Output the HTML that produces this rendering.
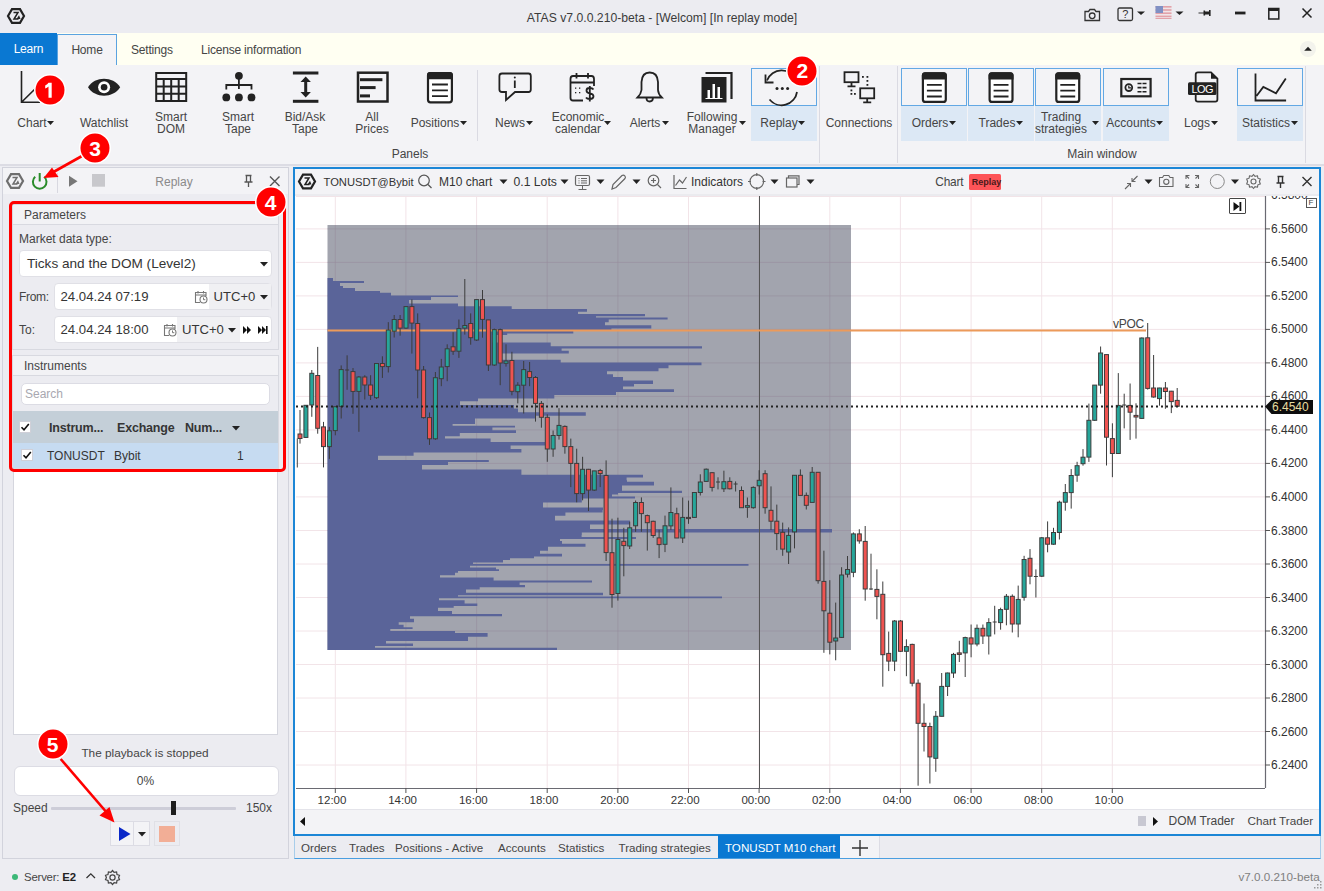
<!DOCTYPE html><html><head><meta charset="utf-8"><style>
*{box-sizing:border-box;margin:0;padding:0}
html,body{width:1324px;height:891px;overflow:hidden;background:#ededf2;font-family:"Liberation Sans", sans-serif;color:#333;}
.a{position:absolute}
.t{position:absolute;white-space:nowrap;font-size:12px;line-height:14px;color:#454545;letter-spacing:-0.2px}
svg{position:absolute;overflow:visible}
</style></head><body>

<div class="a" style="left:0;top:0;width:1324px;height:33px;background:#ececf1"></div>
<div class="t" style="left:0;top:10.5px;width:1324px;text-align:center;color:#3b3b3b;font-size:12.2px;letter-spacing:0">ATAS v7.0.0.210-beta - [Welcom] [In replay mode]</div>
<div class="a" style="left:0;top:33px;width:1324px;height:32px;background:#fffff2"></div>
<div class="a" style="left:0;top:33px;width:57px;height:32px;background:#0a78d2"></div>
<div class="t" style="left:0;top:42px;width:57px;text-align:center;color:#fff">Learn</div>
<div class="a" style="left:57px;top:34px;width:60px;height:32px;background:#f3f3f6;border:1px solid #5aa3e0;border-bottom:none"></div>
<div class="t" style="left:57px;top:43px;width:60px;text-align:center">Home</div>
<div class="t" style="left:131px;top:43px">Settings</div>
<div class="t" style="left:201px;top:43px">License information</div>
<div class="a" style="left:0;top:65px;width:1324px;height:100px;background:#f3f3f6"></div>
<div class="a" style="left:0;top:164px;width:1324px;height:2px;background:#dcdce4"></div>
<div class="a" style="left:750.5px;top:106px;width:66.0px;height:35px;background:#dce8f5"></div>
<div class="a" style="left:750.5px;top:68px;width:66.0px;height:38px;border:1px solid #62a8e4"></div>
<div class="a" style="left:901px;top:106px;width:66px;height:35px;background:#dce8f5"></div>
<div class="a" style="left:901px;top:68px;width:66px;height:38px;border:1px solid #62a8e4"></div>
<div class="a" style="left:968px;top:106px;width:66px;height:35px;background:#dce8f5"></div>
<div class="a" style="left:968px;top:68px;width:66px;height:38px;border:1px solid #62a8e4"></div>
<div class="a" style="left:1035px;top:106px;width:66px;height:35px;background:#dce8f5"></div>
<div class="a" style="left:1035px;top:68px;width:66px;height:38px;border:1px solid #62a8e4"></div>
<div class="a" style="left:1102.5px;top:106px;width:66.0px;height:35px;background:#dce8f5"></div>
<div class="a" style="left:1102.5px;top:68px;width:66.0px;height:38px;border:1px solid #62a8e4"></div>
<div class="a" style="left:1237px;top:106px;width:66px;height:35px;background:#dce8f5"></div>
<div class="a" style="left:1237px;top:68px;width:66px;height:38px;border:1px solid #62a8e4"></div>
<div class="a" style="left:477px;top:70px;width:1px;height:71px;background:#dadae2"></div>
<div class="a" style="left:819px;top:66px;width:1px;height:97px;background:#dadae2"></div>
<div class="a" style="left:897px;top:66px;width:1px;height:97px;background:#dadae2"></div>
<div class="a" style="left:1305px;top:66px;width:1px;height:97px;background:#dadae2"></div>
<div class="t" style="left:-28px;top:116px;width:120px;text-align:center;font-size:12px;color:#454545;letter-spacing:0">Chart</div>
<div class="t" style="left:44px;top:116px;width:120px;text-align:center;font-size:12px;color:#454545;letter-spacing:0">Watchlist</div>
<div class="t" style="left:111px;top:110px;width:120px;text-align:center;font-size:12px;color:#454545;letter-spacing:0">Smart</div>
<div class="t" style="left:111px;top:122px;width:120px;text-align:center;font-size:12px;color:#454545;letter-spacing:0">DOM</div>
<div class="t" style="left:178px;top:110px;width:120px;text-align:center;font-size:12px;color:#454545;letter-spacing:0">Smart</div>
<div class="t" style="left:178px;top:122px;width:120px;text-align:center;font-size:12px;color:#454545;letter-spacing:0">Tape</div>
<div class="t" style="left:245px;top:110px;width:120px;text-align:center;font-size:12px;color:#454545;letter-spacing:0">Bid/Ask</div>
<div class="t" style="left:245px;top:122px;width:120px;text-align:center;font-size:12px;color:#454545;letter-spacing:0">Tape</div>
<div class="t" style="left:312px;top:110px;width:120px;text-align:center;font-size:12px;color:#454545;letter-spacing:0">All</div>
<div class="t" style="left:312px;top:122px;width:120px;text-align:center;font-size:12px;color:#454545;letter-spacing:0">Prices</div>
<div class="t" style="left:375px;top:116px;width:120px;text-align:center;font-size:12px;color:#454545;letter-spacing:0">Positions</div>
<div class="t" style="left:450px;top:116px;width:120px;text-align:center;font-size:12px;color:#454545;letter-spacing:0">News</div>
<div class="t" style="left:518px;top:110px;width:120px;text-align:center;font-size:12px;color:#454545;letter-spacing:0">Economic</div>
<div class="t" style="left:518px;top:122px;width:120px;text-align:center;font-size:12px;color:#454545;letter-spacing:0">calendar</div>
<div class="t" style="left:585px;top:116px;width:120px;text-align:center;font-size:12px;color:#454545;letter-spacing:0">Alerts</div>
<div class="t" style="left:652px;top:110px;width:120px;text-align:center;font-size:12px;color:#454545;letter-spacing:0">Following</div>
<div class="t" style="left:652px;top:122px;width:120px;text-align:center;font-size:12px;color:#454545;letter-spacing:0">Manager</div>
<div class="t" style="left:719px;top:116px;width:120px;text-align:center;font-size:12px;color:#454545;letter-spacing:0">Replay</div>
<div class="t" style="left:799px;top:116px;width:120px;text-align:center;font-size:12px;color:#454545;letter-spacing:0">Connections</div>
<div class="t" style="left:870px;top:116px;width:120px;text-align:center;font-size:12px;color:#454545;letter-spacing:0">Orders</div>
<div class="t" style="left:937px;top:116px;width:120px;text-align:center;font-size:12px;color:#454545;letter-spacing:0">Trades</div>
<div class="t" style="left:1001px;top:110px;width:120px;text-align:center;font-size:12px;color:#454545;letter-spacing:0">Trading</div>
<div class="t" style="left:1001px;top:122px;width:120px;text-align:center;font-size:12px;color:#454545;letter-spacing:0">strategies</div>
<div class="t" style="left:1071px;top:116px;width:120px;text-align:center;font-size:12px;color:#454545;letter-spacing:0">Accounts</div>
<div class="t" style="left:1137px;top:116px;width:120px;text-align:center;font-size:12px;color:#454545;letter-spacing:0">Logs</div>
<div class="t" style="left:1206px;top:116px;width:120px;text-align:center;font-size:12px;color:#454545;letter-spacing:0">Statistics</div>
<div class="t" style="left:350px;top:147px;width:120px;text-align:center;font-size:12px;color:#454545;letter-spacing:0">Panels</div>
<div class="t" style="left:1042px;top:147px;width:120px;text-align:center;font-size:12px;color:#454545;letter-spacing:0">Main window</div>
<svg style="left:47px;top:121px" width="7" height="4"><path d="M0 0H7L3.5 4Z" fill="#222"/></svg>
<svg style="left:460px;top:121px" width="7" height="4"><path d="M0 0H7L3.5 4Z" fill="#222"/></svg>
<svg style="left:526px;top:121px" width="7" height="4"><path d="M0 0H7L3.5 4Z" fill="#222"/></svg>
<svg style="left:604px;top:121px" width="7" height="4"><path d="M0 0H7L3.5 4Z" fill="#222"/></svg>
<svg style="left:662px;top:121px" width="7" height="4"><path d="M0 0H7L3.5 4Z" fill="#222"/></svg>
<svg style="left:739px;top:121px" width="7" height="4"><path d="M0 0H7L3.5 4Z" fill="#222"/></svg>
<svg style="left:798px;top:121px" width="7" height="4"><path d="M0 0H7L3.5 4Z" fill="#222"/></svg>
<svg style="left:949px;top:121px" width="7" height="4"><path d="M0 0H7L3.5 4Z" fill="#222"/></svg>
<svg style="left:1016px;top:121px" width="7" height="4"><path d="M0 0H7L3.5 4Z" fill="#222"/></svg>
<svg style="left:1092px;top:121px" width="7" height="4"><path d="M0 0H7L3.5 4Z" fill="#222"/></svg>
<svg style="left:1156px;top:121px" width="7" height="4"><path d="M0 0H7L3.5 4Z" fill="#222"/></svg>
<svg style="left:1211px;top:121px" width="7" height="4"><path d="M0 0H7L3.5 4Z" fill="#222"/></svg>
<svg style="left:1291px;top:121px" width="7" height="4"><path d="M0 0H7L3.5 4Z" fill="#222"/></svg>

<svg style="left:0;top:0" width="1324" height="170" viewBox="0 0 1324 170">
<g fill="none" stroke="#222" stroke-width="1.6">
 <path d="M21.5 71V102.3H40M21.5 102.3L36 88"/>
</g>
<path d="M88 87.2C95 76 113 76 120.2 87.2C113 98.5 95 98.5 88 87.2Z" fill="#222"/>
<circle cx="104.1" cy="87.2" r="6" fill="#fff"/><circle cx="104.1" cy="87.2" r="3.3" fill="#222"/>
<g fill="none" stroke="#222" stroke-width="2">
 <rect x="156.2" y="73" width="30" height="28"/>
 <path d="M156.2 79H186.2M156.2 86.5H186.2M156.2 93.8H186.2M163.7 79V101M171.2 79V101M178.7 79V101"/>
</g>
<g fill="#222">
 <circle cx="238.9" cy="75.8" r="3.9"/><circle cx="226.3" cy="97.4" r="3.9"/><circle cx="238.9" cy="97.4" r="3.9"/><circle cx="251.5" cy="97.4" r="3.9"/>
</g>
<path d="M238.9 79V89M226.3 89.5V85H251.5V89.5" fill="none" stroke="#222" stroke-width="1.8"/>
<g fill="#222">
 <rect x="292.9" y="71.5" width="25.5" height="3"/><rect x="292.9" y="99.8" width="25.5" height="3"/>
 <path d="M305.7 76.5L300.5 82H304.2V92H300.5L305.7 97.5L310.9 92H307.2V82H310.9Z"/>
</g>
<rect x="358" y="72.7" width="29.5" height="28.8" fill="none" stroke="#222" stroke-width="2.5"/>
<g fill="#222"><rect x="360" y="78.2" width="22.4" height="3"/><rect x="360" y="86.1" width="15.6" height="3"/><rect x="360" y="94.4" width="10" height="3"/></g>
<rect x="428" y="73" width="23.9" height="29.3" rx="2.5" fill="#fff" stroke="#222" stroke-width="2.2"/>
<path d="M427 75Q427 72 430 72H449.9Q452.9 72 452.9 75V79.3H427Z" fill="#222"/>
<path d="M432 84.5H447.9M432 90.3H447.9M432 96.2H447.9" stroke="#222" stroke-width="1.8"/><rect x="922.9" y="73.3" width="22.9" height="28.6" rx="2.5" fill="#fff" stroke="#222" stroke-width="2.2"/>
<path d="M921.9 75.3Q921.9 72.3 924.9 72.3H943.8Q946.8 72.3 946.8 75.3V79.6H921.9Z" fill="#222"/>
<path d="M926.9 84.8H941.8M926.9 90.6H941.8M926.9 96.5H941.8" stroke="#222" stroke-width="1.8"/><rect x="989.6" y="73.3" width="22.9" height="28.6" rx="2.5" fill="#fff" stroke="#222" stroke-width="2.2"/>
<path d="M988.6 75.3Q988.6 72.3 991.6 72.3H1010.5Q1013.5 72.3 1013.5 75.3V79.6H988.6Z" fill="#222"/>
<path d="M993.6 84.8H1008.5M993.6 90.6H1008.5M993.6 96.5H1008.5" stroke="#222" stroke-width="1.8"/><rect x="1056.3" y="73.3" width="22.9" height="28.6" rx="2.5" fill="#fff" stroke="#222" stroke-width="2.2"/>
<path d="M1055.3 75.3Q1055.3 72.3 1058.3 72.3H1077.2Q1080.2 72.3 1080.2 75.3V79.6H1055.3Z" fill="#222"/>
<path d="M1060.3 84.8H1075.2M1060.3 90.6H1075.2M1060.3 96.5H1075.2" stroke="#222" stroke-width="1.8"/>
<path d="M502 73.5H528.5Q530.8 73.5 530.8 76V89.5Q530.8 92 528.5 92H515L506 100V92H502Q499.4 92 499.4 89.5V76Q499.4 73.5 502 73.5Z" fill="none" stroke="#222" stroke-width="1.8"/>
<path d="M514.8 80.5V88" stroke="#222" stroke-width="1.8"/><circle cx="514.8" cy="77.5" r="1" fill="#222"/>
<g fill="none" stroke="#222" stroke-width="1.8">
 <path d="M583 100.5H573Q570.5 100.5 570.5 98V79Q570.5 76 573 76H591.5Q594 76 594 79V86"/>
 <path d="M570.5 82.5H594M576.5 73V78.5M588 73V78.5"/>
 <path d="M593.5 89.5Q592.5 88 589.5 88Q586.5 88 586.5 90.5Q586.5 93 589.8 93.3Q593.5 93.8 593.5 96.3Q593.5 99 589.8 99Q587 99 586 97.5M589.8 86V101.5"/>
</g>
<g fill="#222"><rect x="575" y="87.5" width="1.3" height="1.3"/><rect x="579" y="87.5" width="1.3" height="1.3"/><rect x="575" y="92" width="1.3" height="1.3"/><rect x="579" y="92" width="1.3" height="1.3"/></g>
<path d="M649.7 72.5Q642 72.5 641.5 82V90Q641 94 637.5 97.5H661.8Q658.2 94 658 90V82Q657.5 72.5 649.7 72.5Z" fill="none" stroke="#222" stroke-width="1.8"/>
<path d="M646.5 98Q646.5 101.5 649.7 101.5Q652.9 101.5 652.9 98" fill="none" stroke="#222" stroke-width="1.8"/>
<rect x="701.5" y="77" width="25" height="25.5" fill="#222"/>
<path d="M705.5 73H731.5V99" fill="none" stroke="#222" stroke-width="2.2"/>
<g fill="#fff"><rect x="707.5" y="90" width="2.5" height="8"/><rect x="712.5" y="84" width="2.5" height="14"/><rect x="717.5" y="87" width="2.5" height="11"/><rect x="705.5" y="98" width="17" height="1"/></g>
<path d="M767 80.5A15.6 15.6 0 0 1 796 80M797 92A15.6 15.6 0 0 1 769.5 99.5" fill="none" stroke="#222" stroke-width="1.8"/>
<path d="M765.5 74.5V82.5H773.5" fill="none" stroke="#222" stroke-width="1.8"/>
<g fill="#222"><circle cx="777" cy="88.5" r="1.5"/><circle cx="782.3" cy="88.5" r="1.5"/><circle cx="787.6" cy="88.5" r="1.5"/></g>
<g fill="none" stroke="#222" stroke-width="1.8">
 <rect x="844.5" y="72.2" width="14" height="10"/><rect x="860.2" y="88.3" width="14" height="10"/>
 <path d="M851.5 82.5V86M847.5 86.3H855.5M867.2 98.5V102M863.2 102.3H871.2"/>
</g>
<g fill="#222"><rect x="862" y="76" width="1.8" height="1.8"/><rect x="866.5" y="76" width="1.8" height="1.8"/><rect x="866.5" y="80" width="1.8" height="1.8"/><rect x="866.5" y="84" width="1.8" height="1.8"/><rect x="850.5" y="89.5" width="1.8" height="1.8"/><rect x="850.5" y="93" width="1.8" height="1.8"/><rect x="854" y="93" width="1.8" height="1.8"/></g>
<rect x="1121.3" y="79" width="29.3" height="17.3" fill="none" stroke="#222" stroke-width="2.2"/>
<circle cx="1128.8" cy="87.6" r="3.4" fill="none" stroke="#222" stroke-width="1.8"/><path d="M1128.8 85.5V87.8H1131" stroke="#222" stroke-width="1.2" fill="none"/>
<path d="M1137.5 83.5H1147M1137.5 87.6H1147M1137.5 91.7H1147" stroke="#222" stroke-width="1.6" stroke-dasharray="4 1"/>
<path d="M1198 72.3H1211L1217.4 78.7V99.5Q1217.4 101.6 1215.3 101.6H1198Q1195.7 101.6 1195.7 99.5V74.5Q1195.7 72.3 1198 72.3Z" fill="none" stroke="#222" stroke-width="1.8"/>
<path d="M1211 72.3V78.7H1217.4Z" fill="#222"/>
<rect x="1188" y="82.3" width="28.4" height="12.7" rx="1.5" fill="#222"/>
<text x="1202.2" y="93.3" font-family="Liberation Sans" font-size="11" fill="#fff" text-anchor="middle" letter-spacing="-0.6">LOG</text>
<path d="M1255.5 73.5V100.5H1286.1M1256.5 96L1263.3 87L1276 93.3L1285.8 78.6" fill="none" stroke="#222" stroke-width="1.8"/>
</svg>
<svg style="left:0;top:0" width="1324" height="33">
<path d="M8 16L12 9.2H20L24 16L20 22.8H12Z" fill="none" stroke="#222" stroke-width="2.2"/>
<path d="M13.5 12.5H18L14 19H18.5" fill="none" stroke="#222" stroke-width="1.5"/><path d="M16.5 19L19 15.3L20.5 19Z" fill="#222"/>
<path d="M1085 11.5H1088.5L1090 9.5H1094.5L1096 11.5H1099.5V20.5H1085Z" fill="none" stroke="#333" stroke-width="1.3"/>
<circle cx="1092.2" cy="15.8" r="2.8" fill="none" stroke="#333" stroke-width="1.3"/>
<rect x="1118" y="8" width="14.5" height="12.5" rx="1.5" fill="none" stroke="#333" stroke-width="1.3"/>
<text x="1125.2" y="18.3" font-family="Liberation Sans" font-size="11" fill="#333" text-anchor="middle">?</text>
<path d="M1137 11.5H1145L1141 15Z" fill="#222"/>
<rect x="1155.5" y="6" width="16" height="13" fill="#f0e4e8"/>
<g fill="#e2a2aa"><rect x="1155.5" y="6" width="16" height="1.6"/><rect x="1155.5" y="9.2" width="16" height="1.6"/><rect x="1155.5" y="12.4" width="16" height="1.6"/><rect x="1155.5" y="15.6" width="16" height="1.6"/><rect x="1155.5" y="18" width="16" height="1"/></g>
<rect x="1155.5" y="6" width="7.5" height="7" fill="#8090c4"/>
<path d="M1175.5 11.5H1183.5L1179.5 15Z" fill="#222"/>
<path d="M1198.5 13H1204" stroke="#333" stroke-width="1"/><rect x="1203.5" y="10.5" width="1.6" height="5" fill="#222"/><rect x="1205" y="11.5" width="4" height="3" fill="#222"/><rect x="1209" y="10" width="1.6" height="6" fill="#222"/>
<rect x="1235" y="11.6" width="10.5" height="2.8" fill="#222"/>
<rect x="1268.8" y="8.5" width="10" height="10.5" fill="none" stroke="#222" stroke-width="1.5"/><rect x="1268.8" y="8.5" width="10" height="2.5" fill="#222"/>
<path d="M1302.5 8.5L1311.5 17.5M1311.5 8.5L1302.5 17.5" stroke="#222" stroke-width="1.5"/>
</svg>
<svg style="left:1298px;top:38.5px" width="20" height="20"><circle cx="10" cy="10" r="8" fill="#f3f3ec"/><path d="M6.2 11.8H13.8L10 7.8Z" fill="#222"/></svg>
<div class="a" style="left:2px;top:167px;width:287px;height:692px;background:#ececf1;border:1px solid #d2d3dc"></div>
<div class="a" style="left:3px;top:168px;width:285px;height:26px;background:#f3f3f6"></div>
<svg style="left:0;top:165px" width="290" height="32">
<path d="M7 16L11 9.2H19L23 16L19 22.8H11Z" fill="none" stroke="#6e6e6e" stroke-width="2.2"/>
<path d="M12.5 12.5H17L13 19H17.5" fill="none" stroke="#6e6e6e" stroke-width="1.5"/><path d="M15.5 19L18 15.3L19.5 19Z" fill="#6e6e6e"/>
<path d="M35.2 11.8A6.8 6.8 0 1 0 44.2 11.8" fill="none" stroke="#2a8c2a" stroke-width="2"/><path d="M39.7 8V16.5" stroke="#2a8c2a" stroke-width="2"/>
<rect x="57" y="8" width="1" height="20" fill="#d8d8e0"/>
<path d="M69 10.7L77.5 16.2L69 21.7Z" fill="#777"/>
<rect x="92" y="9" width="13" height="12.7" fill="#c8c8cc"/>
<path d="M245.5 10.5H251.5M246.5 10.5V17H250.5V10.5M244.5 17H252.5M248.5 17V22" fill="none" stroke="#555" stroke-width="1.3"/>
<path d="M270 11.5L279.5 21M279.5 11.5L270 21" stroke="#555" stroke-width="1.4"/>
</svg>
<div class="t" style="left:74.0px;top:174.5px;width:200px;text-align:center;font-size:12px;color:#8a8a8a;letter-spacing:0;">Replay</div>
<div class="a" style="left:12px;top:204px;width:267px;height:146px;background:#ececf1;border:1px solid #d8d9e0"></div>
<div class="a" style="left:13px;top:205px;width:265px;height:20px;background:#f2f2f5;border-bottom:1px solid #d8d9e0"></div>
<div class="t" style="left:24px;top:208px;font-size:12px;color:#454545;letter-spacing:0;">Parameters</div>
<div class="t" style="left:19px;top:232px;font-size:12px;color:#454545;letter-spacing:0;">Market data type:</div>
<div class="a" style="left:19px;top:250px;width:253px;height:27px;background:#fff;border:1px solid #e0e0e6;border-radius:4px"></div>
<div class="t" style="left:27px;top:256.5px;font-size:13.6px;color:#353535;letter-spacing:0;">Ticks and the DOM (Level2)</div>
<svg style="left:260px;top:261.5px" width="8" height="4.5"><path d="M0 0H8L4.0 4.5Z" fill="#222"/></svg>
<div class="t" style="left:19px;top:289.5px;font-size:12px;color:#454545;letter-spacing:0;letter-spacing:-0.3px">From:</div>
<div class="a" style="left:54px;top:283px;width:218px;height:27px;background:#fff;border:1px solid #e0e0e6;border-radius:4px"></div>
<div class="a" style="left:209px;top:284px;width:62px;height:25px;background:#f0f0f3"></div>
<div class="t" style="left:60.5px;top:289.5px;font-size:13.2px;color:#353535;letter-spacing:0;">24.04.24 07:19</div>
<div class="t" style="left:213.5px;top:290px;font-size:13.1px;color:#353535;letter-spacing:0;">UTC+0</div>
<svg style="left:260px;top:294.5px" width="8" height="4.5"><path d="M0 0H8L4.0 4.5Z" fill="#222"/></svg>
<div class="t" style="left:19px;top:322.5px;font-size:12px;color:#454545;letter-spacing:0;">To:</div>
<div class="a" style="left:54px;top:316px;width:218px;height:27px;background:#fff;border:1px solid #e0e0e6;border-radius:4px"></div>
<div class="a" style="left:177px;top:317px;width:63px;height:25px;background:#f0f0f3"></div>
<div class="t" style="left:60.5px;top:322.5px;font-size:13.2px;color:#353535;letter-spacing:0;">24.04.24 18:00</div>
<div class="t" style="left:182px;top:323px;font-size:13.1px;color:#353535;letter-spacing:0;">UTC+0</div>
<svg style="left:228px;top:327.5px" width="8" height="4.5"><path d="M0 0H8L4.0 4.5Z" fill="#222"/></svg>
<svg style="left:194px;top:289.5px" width="14" height="14"><path d="M6 12.5H1.5V2.5H12V6" fill="none" stroke="#777" stroke-width="1.1"/><path d="M1.5 5H12M4 1V3.5M9.5 1V3.5" stroke="#777" stroke-width="1.1"/><circle cx="9.5" cy="9.5" r="3.5" fill="#fff" stroke="#777" stroke-width="1.1"/><path d="M9.5 7.5V9.7H11.3" fill="none" stroke="#777" stroke-width="1"/></svg>
<svg style="left:162.5px;top:322.5px" width="14" height="14"><path d="M6 12.5H1.5V2.5H12V6" fill="none" stroke="#777" stroke-width="1.1"/><path d="M1.5 5H12M4 1V3.5M9.5 1V3.5" stroke="#777" stroke-width="1.1"/><circle cx="9.5" cy="9.5" r="3.5" fill="#fff" stroke="#777" stroke-width="1.1"/><path d="M9.5 7.5V9.7H11.3" fill="none" stroke="#777" stroke-width="1"/></svg>
<svg style="left:243px;top:325px" width="28" height="10"><path d="M0 1L4 5L0 9ZM4 1L8 5L4 9Z" fill="#111"/><path d="M15 1L19 5L15 9ZM19 1L23 5L19 9Z" fill="#111"/><rect x="23" y="1" width="1.6" height="8" fill="#111"/></svg>
<div class="a" style="left:12px;top:355px;width:267px;height:114px;background:#ececf1;border:1px solid #d8d9e0"></div>
<div class="a" style="left:13px;top:356px;width:265px;height:20px;background:#f2f2f5;border-bottom:1px solid #d8d9e0"></div>
<div class="t" style="left:24px;top:358.5px;font-size:12px;color:#454545;letter-spacing:0;">Instruments</div>
<div class="a" style="left:21px;top:383px;width:249px;height:22px;background:#fff;border:1px solid #dcdce4;border-radius:5px"></div>
<div class="t" style="left:25px;top:387px;font-size:12px;color:#a8a8b0;letter-spacing:0;">Search</div>
<div class="a" style="left:13px;top:411px;width:265px;height:32px;background:#c4cfd8"></div>
<div class="a" style="left:13px;top:443px;width:265px;height:25px;background:#c6dbf1"></div>
<div class="a" style="left:19px;top:421px;width:12px;height:12px;background:#fff;border:1px solid #d0d0d8"></div><svg style="left:19px;top:421px" width="12" height="12"><path d="M2.5 6.2L5 8.8L9.8 3" fill="none" stroke="#111" stroke-width="1.6"/></svg>
<div class="a" style="left:21px;top:449px;width:12px;height:12px;background:#fff;border:1px solid #d0d0d8"></div><svg style="left:21px;top:449px" width="12" height="12"><path d="M2.5 6.2L5 8.8L9.8 3" fill="none" stroke="#111" stroke-width="1.6"/></svg>
<div class="t" style="left:49px;top:421px;font-size:12.5px;color:#353535;letter-spacing:0;font-weight:bold;letter-spacing:-0.2px">Instrum...</div>
<div class="t" style="left:117px;top:421px;font-size:12.5px;color:#353535;letter-spacing:0;font-weight:bold;letter-spacing:-0.2px">Exchange</div>
<div class="t" style="left:185px;top:421px;font-size:12.5px;color:#353535;letter-spacing:0;font-weight:bold;letter-spacing:-0.2px">Num...</div>
<svg style="left:232px;top:426px" width="8" height="4.5"><path d="M0 0H8L4.0 4.5Z" fill="#222"/></svg>
<div class="t" style="left:47px;top:448.5px;font-size:12px;color:#353535;letter-spacing:0;">TONUSDT</div>
<div class="t" style="left:114px;top:448.5px;font-size:12px;color:#353535;letter-spacing:0;">Bybit</div>
<div class="t" style="left:237px;top:448.5px;font-size:12px;color:#353535;letter-spacing:0;">1</div>
<div class="a" style="left:13px;top:471px;width:265px;height:264px;background:#fff;border:1px solid #d5d6de"></div>
<div class="t" style="left:45.0px;top:746px;width:200px;text-align:center;font-size:11.8px;color:#454545;letter-spacing:0;">The playback is stopped</div>
<div class="a" style="left:13.5px;top:765.5px;width:265px;height:30px;background:#fff;border:1px solid #dcdce4;border-radius:6px"></div>
<div class="t" style="left:45.5px;top:774px;width:200px;text-align:center;font-size:12px;color:#454545;letter-spacing:0;">0%</div>
<div class="t" style="left:13px;top:801px;font-size:12px;color:#454545;letter-spacing:0;">Speed</div>
<div class="a" style="left:51px;top:807px;width:185px;height:2.5px;background:#cdcdd8;border-radius:1px"></div>
<div class="a" style="left:170.5px;top:801px;width:5.5px;height:13.5px;background:#1e1e1e"></div>
<div class="t" style="left:246px;top:801px;font-size:12px;color:#454545;letter-spacing:0;">150x</div>
<div class="a" style="left:110px;top:821px;width:39.5px;height:25px;background:#f3f3f6;border:1px solid #dcdce4"></div>
<div class="a" style="left:132.5px;top:821px;width:1px;height:25px;background:#dcdce4"></div>
<svg style="left:118px;top:826px" width="14" height="16"><path d="M1 1L12.5 8L1 15Z" fill="#0a28c8"/></svg>
<svg style="left:137.5px;top:832px" width="8" height="4.5"><path d="M0 0H8L4.0 4.5Z" fill="#222"/></svg>
<div class="a" style="left:154px;top:821px;width:26px;height:25px;background:#ececf1;border:1px solid #e0e0e6"></div>
<div class="a" style="left:159px;top:826px;width:16px;height:16px;background:#f2ae96"></div>
<div class="a" style="left:293px;top:167px;width:1028px;height:669px;background:#fff;border:2px solid #1c86d6"></div>
<div class="a" style="left:295px;top:169px;width:1024px;height:27px;background:#f3f3f6"></div>
<div class="a" style="left:295px;top:194px;width:1024px;height:2px;background:#ebebef"></div>
<svg style="left:0;top:165px" width="1324" height="32">
<path d="M299 16.5L303 9.7H311L315 16.5L311 23.3H303Z" fill="none" stroke="#222" stroke-width="2.2"/>
<path d="M304.5 13H309L305 19.5H309.5" fill="none" stroke="#222" stroke-width="1.5"/><path d="M307.5 19.5L310 15.8L311.5 19.5Z" fill="#222"/>
<circle cx="424" cy="15.5" r="5.3" fill="none" stroke="#555" stroke-width="1.2"/><path d="M428 19.5L431.5 23" stroke="#555" stroke-width="1.3"/>
<path d="M499.5 14.5H507.5L503.5 19Z" fill="#222"/>
<path d="M560.5 14.5H568.5L564.5 19Z" fill="#222"/>
<rect x="575.5" y="10.5" width="14" height="10" rx="1.5" fill="none" stroke="#666" stroke-width="1.2"/><path d="M582.5 20.5V24M578.5 24.5H586.5M578.5 13.5H579.5M581 13.5H587M578.5 15.8H579.5M581 15.8H587M578.5 18H579.5M581 18H587" stroke="#666" stroke-width="1"/>
<path d="M596.5 14.5H604.5L600.5 19Z" fill="#222"/>
<path d="M612 24L613 19.5L622 10.5Q623.5 9.5 624.8 10.8Q626 12 625 13.5L616 22.5Z" fill="none" stroke="#666" stroke-width="1.2"/>
<path d="M632.5 14.5H640.5L636.5 19Z" fill="#222"/>
<circle cx="653.5" cy="15.5" r="5.3" fill="none" stroke="#666" stroke-width="1.2"/><path d="M657.5 19.5L661 23M651 15.5H656M653.5 13V18" stroke="#666" stroke-width="1.2"/>
<path d="M674 10V23.5H686.5M675.5 20.5L679.5 15L682.5 18L686.5 12" fill="none" stroke="#666" stroke-width="1.2"/>
<circle cx="756.8" cy="16.5" r="6.8" fill="none" stroke="#666" stroke-width="1.2"/><path d="M756.8 8V11M756.8 22V25M748 16.5H751M762.5 16.5H765.5" stroke="#666" stroke-width="1.2"/>
<path d="M770.5 14.5H778.5L774.5 19Z" fill="#222"/>
<rect x="786.5" y="13" width="10.5" height="9" fill="none" stroke="#666" stroke-width="1.2"/><path d="M788.5 13V10.8H799V19.5H797" fill="none" stroke="#666" stroke-width="1.2"/>
<path d="M806.5 14.5H814.5L810.5 19Z" fill="#222"/>
<path d="M1125 24L1130.5 18.5M1127 18.5H1130.5V22M1137.5 11L1132 16.5M1132 13V16.5H1135.5" fill="none" stroke="#666" stroke-width="1.1"/>
<path d="M1144.5 14.5H1152.5L1148.5 19Z" fill="#222"/>
<path d="M1159.5 12.5H1162.5L1163.8 10.5H1168.8L1170 12.5H1173V21.5H1159.5Z" fill="none" stroke="#666" stroke-width="1.1"/><circle cx="1166.3" cy="16.8" r="2.6" fill="none" stroke="#666" stroke-width="1.1"/>
<path d="M1186 14V10.5H1189.5M1198.5 14V10.5H1195M1186 19V22.5H1189.5M1198.5 19V22.5H1195M1186 10.5L1189 13.5M1198.5 10.5L1195.5 13.5M1186 22.5L1189 19.5M1198.5 22.5L1195.5 19.5" fill="none" stroke="#666" stroke-width="1.1"/>
<circle cx="1217.3" cy="16.5" r="7" fill="none" stroke="#888" stroke-width="1"/>
<path d="M1231 14.5H1239L1235 19Z" fill="#222"/>
<circle cx="1253.5" cy="16.5" r="2.5" fill="none" stroke="#666" stroke-width="1.1"/>
<path d="M1253.5 9.5L1255 11.3L1257.5 10.8L1257.9 13.2L1260.3 14L1259.4 16.5L1260.3 19L1257.9 19.8L1257.5 22.2L1255 21.7L1253.5 23.5L1252 21.7L1249.5 22.2L1249.1 19.8L1246.7 19L1247.6 16.5L1246.7 14L1249.1 13.2L1249.5 10.8L1252 11.3Z" fill="none" stroke="#666" stroke-width="1.1"/>
<path d="M1277.5 11.5H1283.5M1278.5 11.5V18H1282.5V11.5M1276.5 18H1284.5M1280.5 18V23" fill="none" stroke="#333" stroke-width="1.4"/>
<path d="M1302.5 12L1311.5 21M1311.5 12L1302.5 21" stroke="#333" stroke-width="1.4"/>
</svg>
<div class="t" style="left:323.5px;top:175px;font-size:11.2px;color:#333;letter-spacing:0;">TONUSDT@Bybit</div>
<div class="t" style="left:439px;top:175px;font-size:12px;color:#333;letter-spacing:0;">M10 chart</div>
<div class="t" style="left:513.5px;top:175px;font-size:12.2px;color:#333;letter-spacing:0;">0.1 Lots</div>
<div class="t" style="left:691px;top:175px;font-size:12px;color:#333;letter-spacing:0;">Indicators</div>
<div class="t" style="left:935.3px;top:175px;font-size:11.9px;color:#444;letter-spacing:0;letter-spacing:-0.2px">Chart</div>
<div class="a" style="left:969px;top:173.8px;width:32px;height:15.8px;background:#fd5458;border-radius:1.5px"></div>
<div class="t" style="left:971.8px;top:175px;font-size:9px;color:#4a1a1a;letter-spacing:0;font-weight:bold">Replay</div>
<div class="a" style="left:1229px;top:197.5px;width:16.5px;height:16.5px;background:#fff;border:1px solid #444;border-radius:1px"></div>
<svg style="left:1229px;top:197.5px" width="17" height="17"><path d="M4.5 4L10.5 8.5L4.5 13Z" fill="#111"/><rect x="10.5" y="4" width="1.8" height="9" fill="#111"/></svg>
<div class="a" style="left:1306.4px;top:197.5px;width:10.5px;height:10.5px;background:#fff;border:1px solid #555"></div>
<div class="t" style="left:1308.5px;top:195.8px;font-size:8px;color:#444;letter-spacing:0;">F</div>
<div class="a" style="left:295px;top:809px;width:1024px;height:25px;background:#f3f3f6;border-top:1px solid #e4e4ea"></div>
<svg style="left:0;top:0" width="1324" height="891" viewBox="0 0 1324 891">
<defs><clipPath id="pc"><rect x="296" y="196" width="969" height="592"/></clipPath></defs>
<g clip-path="url(#pc)">
<line x1="296" y1="196.5" x2="1265" y2="196.5" stroke="#f2e4e8" stroke-width="1"/>
<line x1="335.3" y1="196" x2="335.3" y2="788" stroke="#f2e4e8" stroke-width="1"/>
<line x1="405.9" y1="196" x2="405.9" y2="788" stroke="#f2e4e8" stroke-width="1"/>
<line x1="476.6" y1="196" x2="476.6" y2="788" stroke="#f2e4e8" stroke-width="1"/>
<line x1="547.2" y1="196" x2="547.2" y2="788" stroke="#f2e4e8" stroke-width="1"/>
<line x1="617.9" y1="196" x2="617.9" y2="788" stroke="#f2e4e8" stroke-width="1"/>
<line x1="688.5" y1="196" x2="688.5" y2="788" stroke="#f2e4e8" stroke-width="1"/>
<line x1="759.1" y1="196" x2="759.1" y2="788" stroke="#f2e4e8" stroke-width="1"/>
<line x1="829.8" y1="196" x2="829.8" y2="788" stroke="#f2e4e8" stroke-width="1"/>
<line x1="900.4" y1="196" x2="900.4" y2="788" stroke="#f2e4e8" stroke-width="1"/>
<line x1="971.1" y1="196" x2="971.1" y2="788" stroke="#f2e4e8" stroke-width="1"/>
<line x1="1041.7" y1="196" x2="1041.7" y2="788" stroke="#f2e4e8" stroke-width="1"/>
<line x1="1112.3" y1="196" x2="1112.3" y2="788" stroke="#f2e4e8" stroke-width="1"/>
<line x1="296" y1="228.9" x2="1265" y2="228.9" stroke="#f2e4e8" stroke-width="1"/>
<line x1="296" y1="262.4" x2="1265" y2="262.4" stroke="#f2e4e8" stroke-width="1"/>
<line x1="296" y1="295.9" x2="1265" y2="295.9" stroke="#f2e4e8" stroke-width="1"/>
<line x1="296" y1="329.4" x2="1265" y2="329.4" stroke="#f2e4e8" stroke-width="1"/>
<line x1="296" y1="362.9" x2="1265" y2="362.9" stroke="#f2e4e8" stroke-width="1"/>
<line x1="296" y1="396.4" x2="1265" y2="396.4" stroke="#f2e4e8" stroke-width="1"/>
<line x1="296" y1="429.9" x2="1265" y2="429.9" stroke="#f2e4e8" stroke-width="1"/>
<line x1="296" y1="463.4" x2="1265" y2="463.4" stroke="#f2e4e8" stroke-width="1"/>
<line x1="296" y1="496.9" x2="1265" y2="496.9" stroke="#f2e4e8" stroke-width="1"/>
<line x1="296" y1="530.5" x2="1265" y2="530.5" stroke="#f2e4e8" stroke-width="1"/>
<line x1="296" y1="564.0" x2="1265" y2="564.0" stroke="#f2e4e8" stroke-width="1"/>
<line x1="296" y1="597.5" x2="1265" y2="597.5" stroke="#f2e4e8" stroke-width="1"/>
<line x1="296" y1="631.0" x2="1265" y2="631.0" stroke="#f2e4e8" stroke-width="1"/>
<line x1="296" y1="664.5" x2="1265" y2="664.5" stroke="#f2e4e8" stroke-width="1"/>
<line x1="296" y1="698.0" x2="1265" y2="698.0" stroke="#f2e4e8" stroke-width="1"/>
<line x1="296" y1="731.5" x2="1265" y2="731.5" stroke="#f2e4e8" stroke-width="1"/>
<line x1="296" y1="765.0" x2="1265" y2="765.0" stroke="#f2e4e8" stroke-width="1"/>
<rect x="327.5" y="225" width="523.5" height="425" fill="#a2a4ae"/>
<line x1="335.3" y1="225" x2="335.3" y2="650" stroke="#968a9c" stroke-opacity="0.5" stroke-width="1"/>
<line x1="405.9" y1="225" x2="405.9" y2="650" stroke="#968a9c" stroke-opacity="0.5" stroke-width="1"/>
<line x1="476.6" y1="225" x2="476.6" y2="650" stroke="#968a9c" stroke-opacity="0.5" stroke-width="1"/>
<line x1="547.2" y1="225" x2="547.2" y2="650" stroke="#968a9c" stroke-opacity="0.5" stroke-width="1"/>
<line x1="617.9" y1="225" x2="617.9" y2="650" stroke="#968a9c" stroke-opacity="0.5" stroke-width="1"/>
<line x1="688.5" y1="225" x2="688.5" y2="650" stroke="#968a9c" stroke-opacity="0.5" stroke-width="1"/>
<line x1="759.1" y1="225" x2="759.1" y2="650" stroke="#968a9c" stroke-opacity="0.5" stroke-width="1"/>
<line x1="829.8" y1="225" x2="829.8" y2="650" stroke="#968a9c" stroke-opacity="0.5" stroke-width="1"/>
<line x1="327.5" y1="228.9" x2="851" y2="228.9" stroke="#968a9c" stroke-opacity="0.5" stroke-width="1"/>
<line x1="327.5" y1="262.4" x2="851" y2="262.4" stroke="#968a9c" stroke-opacity="0.5" stroke-width="1"/>
<line x1="327.5" y1="295.9" x2="851" y2="295.9" stroke="#968a9c" stroke-opacity="0.5" stroke-width="1"/>
<line x1="327.5" y1="329.4" x2="851" y2="329.4" stroke="#968a9c" stroke-opacity="0.5" stroke-width="1"/>
<line x1="327.5" y1="362.9" x2="851" y2="362.9" stroke="#968a9c" stroke-opacity="0.5" stroke-width="1"/>
<line x1="327.5" y1="396.4" x2="851" y2="396.4" stroke="#968a9c" stroke-opacity="0.5" stroke-width="1"/>
<line x1="327.5" y1="429.9" x2="851" y2="429.9" stroke="#968a9c" stroke-opacity="0.5" stroke-width="1"/>
<line x1="327.5" y1="463.4" x2="851" y2="463.4" stroke="#968a9c" stroke-opacity="0.5" stroke-width="1"/>
<line x1="327.5" y1="496.9" x2="851" y2="496.9" stroke="#968a9c" stroke-opacity="0.5" stroke-width="1"/>
<line x1="327.5" y1="530.5" x2="851" y2="530.5" stroke="#968a9c" stroke-opacity="0.5" stroke-width="1"/>
<line x1="327.5" y1="564.0" x2="851" y2="564.0" stroke="#968a9c" stroke-opacity="0.5" stroke-width="1"/>
<line x1="327.5" y1="597.5" x2="851" y2="597.5" stroke="#968a9c" stroke-opacity="0.5" stroke-width="1"/>
<line x1="327.5" y1="631.0" x2="851" y2="631.0" stroke="#968a9c" stroke-opacity="0.5" stroke-width="1"/>
<path d="M327.5 278H333V281H327.5ZM327.5 281H364V283H327.5ZM327.5 283H340V286H327.5ZM327.5 286H343V288H327.5ZM327.5 288H355V291H327.5ZM327.5 291H380V292.7H327.5ZM327.5 292.7H391V295.4H327.5ZM327.5 295.4H458V297H327.5ZM327.5 297H431V300H327.5ZM327.5 300H409V303.5H327.5ZM327.5 303.5H458V306.3H327.5ZM327.5 306.3H511.7V309H327.5ZM327.5 309H587V311.7H327.5ZM327.5 311.7H578V314H327.5ZM327.5 314H645V316.3H327.5ZM327.5 316.3H596V317.6H327.5ZM327.5 317.6H667.6V319.4H327.5ZM327.5 319.4H608.7V322.3H327.5ZM327.5 322.3H605V325.3H327.5ZM327.5 325.3H651.3V328.4H327.5ZM327.5 328.4H611.4V330.8H327.5ZM327.5 330.8H573.3V333.5H327.5ZM327.5 333.5H507.2V335H327.5ZM327.5 335H492V342.6H327.5ZM327.5 342.6H550.7V346.2H327.5ZM327.5 346.2H702V348.4H327.5ZM327.5 348.4H561.6V350.7H327.5ZM327.5 350.7H568.8V353.4H327.5ZM327.5 353.4H500V359.8H327.5ZM327.5 359.8H560.7V362.5H327.5ZM327.5 362.5H701.5V365.2H327.5ZM327.5 365.2H668.5V368.3H327.5ZM327.5 368.3H658.5V371.2H327.5ZM327.5 371.2H607V374.3H327.5ZM327.5 374.3H613V377H327.5ZM327.5 377H623V380.6H327.5ZM327.5 380.6H653V383.9H327.5ZM327.5 383.9H634V386.4H327.5ZM327.5 386.4H623V389.3H327.5ZM327.5 389.3H674V391.9H327.5ZM327.5 391.9H616V395.1H327.5ZM327.5 395.1H554.3V398.6H327.5ZM327.5 398.6H478V401.3H327.5ZM327.5 401.3H460V405H327.5ZM327.5 405H514V408.6H327.5ZM327.5 408.6H518V412.2H327.5ZM327.5 412.2H585.8V415.8H327.5ZM327.5 415.8H536V418.6H327.5ZM327.5 418.6H475V424H327.5ZM327.5 424H452.6V425.8H327.5ZM327.5 425.8H515V427.6H327.5ZM327.5 427.6H492.4V430.3H327.5ZM327.5 430.3H516V433H327.5ZM327.5 433H459.8V436.3H327.5ZM327.5 436.3H445V438.5H327.5ZM327.5 438.5H490.6V442H327.5ZM327.5 442H545V445.4H327.5ZM327.5 445.4H510.6V449H327.5ZM327.5 449H521.4V452.6H327.5ZM327.5 452.6H413.6V455.7H327.5ZM327.5 455.7H378V460H327.5ZM327.5 460H488.8V462H327.5ZM327.5 462H448V465H327.5ZM327.5 465H422V469.5H327.5ZM327.5 469.5H521.4V474.8H327.5ZM327.5 474.8H643V477.5H327.5ZM327.5 477.5H626.6V480.2H327.5ZM327.5 480.2H627V481.8H327.5ZM327.5 481.8H654V485.4H327.5ZM327.5 485.4H622V490.8H327.5ZM327.5 490.8H682V492.9H327.5ZM327.5 492.9H618V494.5H327.5ZM327.5 494.5H612V496.5H327.5ZM327.5 496.5H635V498.5H327.5ZM327.5 498.5H581.8V502.6H327.5ZM327.5 502.6H543V507.4H327.5ZM327.5 507.4H603V509.9H327.5ZM327.5 509.9H602.6V512.6H327.5ZM327.5 512.6H565.4V515.7H327.5ZM327.5 515.7H555V520.4H327.5ZM327.5 520.4H630V524.4H327.5ZM327.5 524.4H590V529H327.5ZM327.5 529H832V532.5H327.5ZM327.5 532.5H581.8V535H327.5ZM327.5 535H581.6V537H327.5ZM327.5 537H636V539H327.5ZM327.5 539H560V541H327.5ZM327.5 541H562V543.8H327.5ZM327.5 543.8H585.5V546.8H327.5ZM327.5 546.8H548V550.7H327.5ZM327.5 550.7H540V553.7H327.5ZM327.5 553.7H562V556.6H327.5ZM327.5 556.6H534V558.3H327.5ZM327.5 558.3H510V560.1H327.5ZM327.5 560.1H503V562.5H327.5ZM327.5 562.5H473V564.1H327.5ZM327.5 564.1H748.5V565.8H327.5ZM327.5 565.8H470V567.4H327.5ZM327.5 567.4H496V569.2H327.5ZM327.5 569.2H499V571H327.5ZM327.5 571H458V572.8H327.5ZM327.5 572.8H455V575.2H327.5ZM327.5 575.2H440V577.6H327.5ZM327.5 577.6H493.6V580.6H327.5ZM327.5 580.6H592V582.5H327.5ZM327.5 582.5H519.6V584.9H327.5ZM327.5 584.9H525V587.3H327.5ZM327.5 587.3H479.7V589.5H327.5ZM327.5 589.5H466V592.7H327.5ZM327.5 592.7H603V595.2H327.5ZM327.5 595.2H458V596.5H327.5ZM327.5 596.5H722V598.2H327.5ZM327.5 598.2H439V600.3H327.5ZM327.5 600.3H464.6V603.6H327.5ZM327.5 603.6H477.3V606H327.5ZM327.5 606H453.7V607.8H327.5ZM327.5 607.8H438V610.9H327.5ZM327.5 610.9H452V613.9H327.5ZM327.5 613.9H502V616.3H327.5ZM327.5 616.3H410V618.7H327.5ZM327.5 618.7H414V622.3H327.5ZM327.5 622.3H398.7V624.8H327.5ZM327.5 624.8H403.6V627.2H327.5ZM327.5 627.2H412.6V629H327.5ZM327.5 629H390.3V631H327.5ZM327.5 631H455V633H327.5ZM327.5 633H487.6V636.8H327.5ZM327.5 636.8H468V641H327.5ZM327.5 641H386V643.5H327.5ZM327.5 643.5H413V645.9H327.5ZM327.5 645.9H375V647.7H327.5ZM327.5 647.7H557V650H327.5Z" fill="#5a6499"/>
<line x1="759.5" y1="196" x2="759.5" y2="788" stroke="#555" stroke-width="1"/>
<line x1="327.5" y1="330.4" x2="1146" y2="330.4" stroke="#ec9a5a" stroke-width="2"/>
<line x1="297.3" y1="438.5" x2="297.3" y2="467.5" stroke="#444" stroke-width="1"/>
<line x1="300.0" y1="410" x2="300.0" y2="443.6" stroke="#3c3c3c" stroke-width="1"/>
<rect x="298.0" y="434" width="4" height="4.5" fill="#ef5350" stroke="#3c3c3c" stroke-width="1"/>
<line x1="305.9" y1="405" x2="305.9" y2="438" stroke="#3c3c3c" stroke-width="1"/>
<rect x="303.9" y="405.3" width="4" height="32.1" fill="#26a69a" stroke="#3c3c3c" stroke-width="1"/>
<line x1="311.8" y1="370" x2="311.8" y2="416.8" stroke="#3c3c3c" stroke-width="1"/>
<rect x="309.8" y="373.3" width="4" height="31.7" fill="#26a69a" stroke="#3c3c3c" stroke-width="1"/>
<line x1="317.7" y1="346.9" x2="317.7" y2="433.7" stroke="#3c3c3c" stroke-width="1"/>
<rect x="315.7" y="375.5" width="4" height="52.8" fill="#ef5350" stroke="#3c3c3c" stroke-width="1"/>
<line x1="323.5" y1="421.9" x2="323.5" y2="467.4" stroke="#3c3c3c" stroke-width="1"/>
<rect x="321.5" y="426.9" width="4" height="19.7" fill="#ef5350" stroke="#3c3c3c" stroke-width="1"/>
<line x1="329.4" y1="426.9" x2="329.4" y2="458.9" stroke="#3c3c3c" stroke-width="1"/>
<rect x="327.4" y="430.8" width="4" height="15.8" fill="#26a69a" stroke="#3c3c3c" stroke-width="1"/>
<line x1="335.3" y1="406.7" x2="335.3" y2="435.3" stroke="#3c3c3c" stroke-width="1"/>
<rect x="333.3" y="406.7" width="4" height="23.9" fill="#26a69a" stroke="#3c3c3c" stroke-width="1"/>
<line x1="341.2" y1="365.4" x2="341.2" y2="418.5" stroke="#3c3c3c" stroke-width="1"/>
<rect x="339.2" y="369.6" width="4" height="36.8" fill="#26a69a" stroke="#3c3c3c" stroke-width="1"/>
<line x1="347.1" y1="355.3" x2="347.1" y2="389.8" stroke="#3c3c3c" stroke-width="1"/>
<line x1="345.1" y1="370" x2="349.1" y2="370" stroke="#3c3c3c" stroke-width="1"/>
<line x1="353.0" y1="368" x2="353.0" y2="413.8" stroke="#3c3c3c" stroke-width="1"/>
<rect x="351.0" y="371.6" width="4" height="19.8" fill="#ef5350" stroke="#3c3c3c" stroke-width="1"/>
<line x1="358.9" y1="376" x2="358.9" y2="431.8" stroke="#3c3c3c" stroke-width="1"/>
<rect x="356.9" y="377" width="4" height="14.4" fill="#26a69a" stroke="#3c3c3c" stroke-width="1"/>
<line x1="364.8" y1="375.2" x2="364.8" y2="399.5" stroke="#3c3c3c" stroke-width="1"/>
<rect x="362.8" y="377" width="4" height="8.0" fill="#ef5350" stroke="#3c3c3c" stroke-width="1"/>
<line x1="370.6" y1="375.2" x2="370.6" y2="400" stroke="#3c3c3c" stroke-width="1"/>
<rect x="368.6" y="385" width="4" height="10.3" fill="#ef5350" stroke="#3c3c3c" stroke-width="1"/>
<line x1="376.5" y1="363.5" x2="376.5" y2="399" stroke="#3c3c3c" stroke-width="1"/>
<rect x="374.5" y="363.5" width="4" height="34.2" fill="#26a69a" stroke="#3c3c3c" stroke-width="1"/>
<line x1="382.4" y1="356.3" x2="382.4" y2="377.9" stroke="#3c3c3c" stroke-width="1"/>
<rect x="380.4" y="363.5" width="4" height="3.1" fill="#ef5350" stroke="#3c3c3c" stroke-width="1"/>
<line x1="388.3" y1="322.2" x2="388.3" y2="372.5" stroke="#3c3c3c" stroke-width="1"/>
<rect x="386.3" y="330" width="4" height="36.6" fill="#26a69a" stroke="#3c3c3c" stroke-width="1"/>
<line x1="394.2" y1="315" x2="394.2" y2="337.5" stroke="#3c3c3c" stroke-width="1"/>
<rect x="392.2" y="319.5" width="4" height="11.7" fill="#26a69a" stroke="#3c3c3c" stroke-width="1"/>
<line x1="400.1" y1="315" x2="400.1" y2="335.7" stroke="#3c3c3c" stroke-width="1"/>
<rect x="398.1" y="319.5" width="4" height="8.6" fill="#ef5350" stroke="#3c3c3c" stroke-width="1"/>
<line x1="406.0" y1="306.6" x2="406.0" y2="329" stroke="#3c3c3c" stroke-width="1"/>
<rect x="404.0" y="306.6" width="4" height="21.5" fill="#26a69a" stroke="#3c3c3c" stroke-width="1"/>
<line x1="411.9" y1="299.4" x2="411.9" y2="353.6" stroke="#3c3c3c" stroke-width="1"/>
<rect x="409.9" y="306.6" width="4" height="16.5" fill="#ef5350" stroke="#3c3c3c" stroke-width="1"/>
<line x1="417.7" y1="313.4" x2="417.7" y2="398.3" stroke="#3c3c3c" stroke-width="1"/>
<rect x="415.7" y="323.5" width="4" height="46.5" fill="#ef5350" stroke="#3c3c3c" stroke-width="1"/>
<line x1="423.6" y1="366" x2="423.6" y2="418.6" stroke="#3c3c3c" stroke-width="1"/>
<rect x="421.6" y="370" width="4" height="47.6" fill="#ef5350" stroke="#3c3c3c" stroke-width="1"/>
<line x1="429.5" y1="412.5" x2="429.5" y2="444.9" stroke="#3c3c3c" stroke-width="1"/>
<rect x="427.5" y="417.6" width="4" height="21.2" fill="#ef5350" stroke="#3c3c3c" stroke-width="1"/>
<line x1="435.4" y1="372" x2="435.4" y2="439.8" stroke="#3c3c3c" stroke-width="1"/>
<rect x="433.4" y="377.7" width="4" height="61.1" fill="#26a69a" stroke="#3c3c3c" stroke-width="1"/>
<line x1="441.3" y1="358.9" x2="441.3" y2="386.2" stroke="#3c3c3c" stroke-width="1"/>
<rect x="439.3" y="367" width="4" height="11.7" fill="#26a69a" stroke="#3c3c3c" stroke-width="1"/>
<line x1="447.2" y1="344.3" x2="447.2" y2="381.2" stroke="#3c3c3c" stroke-width="1"/>
<rect x="445.2" y="348.8" width="4" height="17.8" fill="#26a69a" stroke="#3c3c3c" stroke-width="1"/>
<line x1="453.1" y1="332.2" x2="453.1" y2="354.9" stroke="#3c3c3c" stroke-width="1"/>
<rect x="451.1" y="346.8" width="4" height="4.4" fill="#ef5350" stroke="#3c3c3c" stroke-width="1"/>
<line x1="458.9" y1="319.5" x2="458.9" y2="357.9" stroke="#3c3c3c" stroke-width="1"/>
<rect x="456.9" y="328.6" width="4" height="22.6" fill="#26a69a" stroke="#3c3c3c" stroke-width="1"/>
<line x1="464.8" y1="279" x2="464.8" y2="334.6" stroke="#3c3c3c" stroke-width="1"/>
<rect x="462.8" y="325.5" width="4" height="2.6" fill="#26a69a" stroke="#3c3c3c" stroke-width="1"/>
<line x1="470.7" y1="313.4" x2="470.7" y2="344.7" stroke="#3c3c3c" stroke-width="1"/>
<rect x="468.7" y="323.5" width="4" height="14.2" fill="#ef5350" stroke="#3c3c3c" stroke-width="1"/>
<line x1="476.6" y1="299.6" x2="476.6" y2="341" stroke="#3c3c3c" stroke-width="1"/>
<rect x="474.6" y="299.6" width="4" height="40.4" fill="#26a69a" stroke="#3c3c3c" stroke-width="1"/>
<line x1="482.5" y1="290" x2="482.5" y2="337.7" stroke="#3c3c3c" stroke-width="1"/>
<rect x="480.5" y="299.6" width="4" height="19.8" fill="#ef5350" stroke="#3c3c3c" stroke-width="1"/>
<line x1="488.4" y1="319.9" x2="488.4" y2="371" stroke="#3c3c3c" stroke-width="1"/>
<rect x="486.4" y="319.9" width="4" height="45.1" fill="#ef5350" stroke="#3c3c3c" stroke-width="1"/>
<line x1="494.3" y1="328.6" x2="494.3" y2="366" stroke="#3c3c3c" stroke-width="1"/>
<rect x="492.3" y="329.6" width="4" height="35.4" fill="#26a69a" stroke="#3c3c3c" stroke-width="1"/>
<line x1="500.2" y1="328.6" x2="500.2" y2="385.2" stroke="#3c3c3c" stroke-width="1"/>
<rect x="498.2" y="329.6" width="4" height="33.4" fill="#ef5350" stroke="#3c3c3c" stroke-width="1"/>
<line x1="506.0" y1="344.3" x2="506.0" y2="366.6" stroke="#3c3c3c" stroke-width="1"/>
<rect x="504.0" y="361" width="4" height="2.3" fill="#26a69a" stroke="#3c3c3c" stroke-width="1"/>
<line x1="511.9" y1="351.8" x2="511.9" y2="395.3" stroke="#3c3c3c" stroke-width="1"/>
<rect x="509.9" y="360.5" width="4" height="30.8" fill="#ef5350" stroke="#3c3c3c" stroke-width="1"/>
<line x1="517.8" y1="382.2" x2="517.8" y2="403.4" stroke="#3c3c3c" stroke-width="1"/>
<rect x="515.8" y="385.2" width="4" height="6.5" fill="#26a69a" stroke="#3c3c3c" stroke-width="1"/>
<line x1="523.7" y1="361" x2="523.7" y2="413.5" stroke="#3c3c3c" stroke-width="1"/>
<rect x="521.7" y="369.6" width="4" height="15.6" fill="#26a69a" stroke="#3c3c3c" stroke-width="1"/>
<line x1="529.6" y1="362" x2="529.6" y2="386.2" stroke="#3c3c3c" stroke-width="1"/>
<rect x="527.6" y="371.6" width="4" height="5.9" fill="#ef5350" stroke="#3c3c3c" stroke-width="1"/>
<line x1="535.5" y1="376" x2="535.5" y2="421.6" stroke="#3c3c3c" stroke-width="1"/>
<rect x="533.5" y="377.5" width="4" height="25.9" fill="#ef5350" stroke="#3c3c3c" stroke-width="1"/>
<line x1="541.4" y1="401" x2="541.4" y2="427.7" stroke="#3c3c3c" stroke-width="1"/>
<rect x="539.4" y="403.4" width="4" height="13.9" fill="#ef5350" stroke="#3c3c3c" stroke-width="1"/>
<line x1="547.3" y1="414.3" x2="547.3" y2="461.8" stroke="#3c3c3c" stroke-width="1"/>
<rect x="545.3" y="417.3" width="4" height="31.7" fill="#ef5350" stroke="#3c3c3c" stroke-width="1"/>
<line x1="553.1" y1="430.5" x2="553.1" y2="456.8" stroke="#3c3c3c" stroke-width="1"/>
<rect x="551.1" y="435.5" width="4" height="13.5" fill="#26a69a" stroke="#3c3c3c" stroke-width="1"/>
<line x1="559.0" y1="408.2" x2="559.0" y2="439.6" stroke="#3c3c3c" stroke-width="1"/>
<rect x="557.0" y="425.4" width="4" height="10.1" fill="#26a69a" stroke="#3c3c3c" stroke-width="1"/>
<line x1="564.9" y1="425.4" x2="564.9" y2="453.7" stroke="#3c3c3c" stroke-width="1"/>
<rect x="562.9" y="426.4" width="4" height="20.2" fill="#ef5350" stroke="#3c3c3c" stroke-width="1"/>
<line x1="570.8" y1="438.6" x2="570.8" y2="487.1" stroke="#3c3c3c" stroke-width="1"/>
<rect x="568.8" y="446.6" width="4" height="16.8" fill="#ef5350" stroke="#3c3c3c" stroke-width="1"/>
<line x1="576.7" y1="448.7" x2="576.7" y2="502.3" stroke="#3c3c3c" stroke-width="1"/>
<rect x="574.7" y="463.4" width="4" height="30.2" fill="#ef5350" stroke="#3c3c3c" stroke-width="1"/>
<line x1="582.6" y1="456.8" x2="582.6" y2="500.3" stroke="#3c3c3c" stroke-width="1"/>
<rect x="580.6" y="469.3" width="4" height="24.3" fill="#26a69a" stroke="#3c3c3c" stroke-width="1"/>
<line x1="588.5" y1="468.9" x2="588.5" y2="511" stroke="#3c3c3c" stroke-width="1"/>
<rect x="586.5" y="469.3" width="4" height="20.8" fill="#ef5350" stroke="#3c3c3c" stroke-width="1"/>
<line x1="594.3" y1="470.9" x2="594.3" y2="491" stroke="#3c3c3c" stroke-width="1"/>
<rect x="592.3" y="470.9" width="4" height="19.2" fill="#26a69a" stroke="#3c3c3c" stroke-width="1"/>
<line x1="600.2" y1="468.9" x2="600.2" y2="487.1" stroke="#3c3c3c" stroke-width="1"/>
<rect x="598.2" y="470.5" width="4" height="3.1" fill="#ef5350" stroke="#3c3c3c" stroke-width="1"/>
<line x1="606.1" y1="460.4" x2="606.1" y2="561" stroke="#3c3c3c" stroke-width="1"/>
<rect x="604.1" y="475.5" width="4" height="77.1" fill="#ef5350" stroke="#3c3c3c" stroke-width="1"/>
<line x1="612.0" y1="518.7" x2="612.0" y2="607.7" stroke="#3c3c3c" stroke-width="1"/>
<rect x="610.0" y="552.7" width="4" height="41.8" fill="#ef5350" stroke="#3c3c3c" stroke-width="1"/>
<line x1="617.9" y1="517.7" x2="617.9" y2="600.6" stroke="#3c3c3c" stroke-width="1"/>
<rect x="615.9" y="539.5" width="4" height="54.0" fill="#26a69a" stroke="#3c3c3c" stroke-width="1"/>
<line x1="623.8" y1="527.8" x2="623.8" y2="576.3" stroke="#3c3c3c" stroke-width="1"/>
<rect x="621.8" y="541.3" width="4" height="4.3" fill="#ef5350" stroke="#3c3c3c" stroke-width="1"/>
<line x1="629.7" y1="521.7" x2="629.7" y2="549" stroke="#3c3c3c" stroke-width="1"/>
<rect x="627.7" y="527.8" width="4" height="18.2" fill="#26a69a" stroke="#3c3c3c" stroke-width="1"/>
<line x1="635.6" y1="500.5" x2="635.6" y2="531.8" stroke="#3c3c3c" stroke-width="1"/>
<rect x="633.6" y="502.5" width="4" height="23.3" fill="#26a69a" stroke="#3c3c3c" stroke-width="1"/>
<line x1="641.4" y1="497.4" x2="641.4" y2="531.8" stroke="#3c3c3c" stroke-width="1"/>
<rect x="639.4" y="502.5" width="4" height="11.1" fill="#ef5350" stroke="#3c3c3c" stroke-width="1"/>
<line x1="647.3" y1="514.6" x2="647.3" y2="550.6" stroke="#3c3c3c" stroke-width="1"/>
<rect x="645.3" y="515.6" width="4" height="7.1" fill="#ef5350" stroke="#3c3c3c" stroke-width="1"/>
<line x1="653.2" y1="520.7" x2="653.2" y2="537.9" stroke="#3c3c3c" stroke-width="1"/>
<rect x="651.2" y="521.3" width="4" height="14.2" fill="#ef5350" stroke="#3c3c3c" stroke-width="1"/>
<line x1="659.1" y1="529.8" x2="659.1" y2="558.1" stroke="#3c3c3c" stroke-width="1"/>
<rect x="657.1" y="537.9" width="4" height="6.7" fill="#ef5350" stroke="#3c3c3c" stroke-width="1"/>
<line x1="665.0" y1="515.6" x2="665.0" y2="552.1" stroke="#3c3c3c" stroke-width="1"/>
<rect x="663.0" y="525.8" width="4" height="18.5" fill="#26a69a" stroke="#3c3c3c" stroke-width="1"/>
<line x1="670.9" y1="487.4" x2="670.9" y2="529.9" stroke="#3c3c3c" stroke-width="1"/>
<rect x="668.9" y="512.5" width="4" height="13.4" fill="#26a69a" stroke="#3c3c3c" stroke-width="1"/>
<line x1="676.8" y1="507.7" x2="676.8" y2="538" stroke="#3c3c3c" stroke-width="1"/>
<rect x="674.8" y="513.7" width="4" height="24.3" fill="#ef5350" stroke="#3c3c3c" stroke-width="1"/>
<line x1="682.7" y1="497.5" x2="682.7" y2="543" stroke="#3c3c3c" stroke-width="1"/>
<rect x="680.7" y="517.4" width="4" height="20.6" fill="#26a69a" stroke="#3c3c3c" stroke-width="1"/>
<line x1="688.5" y1="500.6" x2="688.5" y2="523.8" stroke="#3c3c3c" stroke-width="1"/>
<rect x="686.5" y="517.4" width="4" height="1.2" fill="#ef5350" stroke="#3c3c3c" stroke-width="1"/>
<line x1="694.4" y1="492" x2="694.4" y2="518" stroke="#3c3c3c" stroke-width="1"/>
<rect x="692.4" y="492.5" width="4" height="24.9" fill="#26a69a" stroke="#3c3c3c" stroke-width="1"/>
<line x1="700.3" y1="474.3" x2="700.3" y2="495.5" stroke="#3c3c3c" stroke-width="1"/>
<rect x="698.3" y="482" width="4" height="10.5" fill="#26a69a" stroke="#3c3c3c" stroke-width="1"/>
<line x1="706.2" y1="468.5" x2="706.2" y2="482" stroke="#3c3c3c" stroke-width="1"/>
<rect x="704.2" y="469.2" width="4" height="12.2" fill="#26a69a" stroke="#3c3c3c" stroke-width="1"/>
<line x1="712.1" y1="472.3" x2="712.1" y2="491.5" stroke="#3c3c3c" stroke-width="1"/>
<rect x="710.1" y="472.7" width="4" height="14.7" fill="#ef5350" stroke="#3c3c3c" stroke-width="1"/>
<line x1="718.0" y1="477.3" x2="718.0" y2="489.4" stroke="#3c3c3c" stroke-width="1"/>
<line x1="716.0" y1="482" x2="720.0" y2="482" stroke="#3c3c3c" stroke-width="1"/>
<line x1="723.9" y1="470.7" x2="723.9" y2="492" stroke="#3c3c3c" stroke-width="1"/>
<rect x="721.9" y="481.7" width="4" height="7.1" fill="#26a69a" stroke="#3c3c3c" stroke-width="1"/>
<line x1="729.8" y1="477.3" x2="729.8" y2="489.4" stroke="#3c3c3c" stroke-width="1"/>
<rect x="727.8" y="481.4" width="4" height="7.4" fill="#ef5350" stroke="#3c3c3c" stroke-width="1"/>
<line x1="735.6" y1="481.4" x2="735.6" y2="491.5" stroke="#3c3c3c" stroke-width="1"/>
<line x1="733.6" y1="484" x2="737.6" y2="484" stroke="#3c3c3c" stroke-width="1"/>
<line x1="741.5" y1="486.4" x2="741.5" y2="507.7" stroke="#3c3c3c" stroke-width="1"/>
<rect x="739.5" y="490.5" width="4" height="17.2" fill="#ef5350" stroke="#3c3c3c" stroke-width="1"/>
<line x1="747.4" y1="497.5" x2="747.4" y2="517.8" stroke="#3c3c3c" stroke-width="1"/>
<rect x="745.4" y="505.6" width="4" height="1.7" fill="#26a69a" stroke="#3c3c3c" stroke-width="1"/>
<line x1="753.3" y1="486.4" x2="753.3" y2="508.7" stroke="#3c3c3c" stroke-width="1"/>
<rect x="751.3" y="487.4" width="4" height="20.3" fill="#26a69a" stroke="#3c3c3c" stroke-width="1"/>
<line x1="759.2" y1="470.2" x2="759.2" y2="494.5" stroke="#3c3c3c" stroke-width="1"/>
<rect x="757.2" y="480.3" width="4" height="5.5" fill="#26a69a" stroke="#3c3c3c" stroke-width="1"/>
<line x1="765.1" y1="470.2" x2="765.1" y2="513.7" stroke="#3c3c3c" stroke-width="1"/>
<rect x="763.1" y="473.7" width="4" height="34.0" fill="#ef5350" stroke="#3c3c3c" stroke-width="1"/>
<line x1="771.0" y1="486.4" x2="771.0" y2="529.9" stroke="#3c3c3c" stroke-width="1"/>
<rect x="769.0" y="510.3" width="4" height="10.9" fill="#ef5350" stroke="#3c3c3c" stroke-width="1"/>
<line x1="776.8" y1="504.6" x2="776.8" y2="550.1" stroke="#3c3c3c" stroke-width="1"/>
<rect x="774.8" y="521.2" width="4" height="12.4" fill="#ef5350" stroke="#3c3c3c" stroke-width="1"/>
<line x1="782.7" y1="522.6" x2="782.7" y2="555.8" stroke="#3c3c3c" stroke-width="1"/>
<rect x="780.7" y="532.3" width="4" height="16.8" fill="#ef5350" stroke="#3c3c3c" stroke-width="1"/>
<line x1="788.6" y1="527.4" x2="788.6" y2="564" stroke="#3c3c3c" stroke-width="1"/>
<rect x="786.6" y="535.4" width="4" height="16.6" fill="#26a69a" stroke="#3c3c3c" stroke-width="1"/>
<line x1="794.5" y1="475.3" x2="794.5" y2="548.4" stroke="#3c3c3c" stroke-width="1"/>
<rect x="792.5" y="475.3" width="4" height="56.6" fill="#26a69a" stroke="#3c3c3c" stroke-width="1"/>
<line x1="800.4" y1="469.4" x2="800.4" y2="495.4" stroke="#3c3c3c" stroke-width="1"/>
<rect x="798.4" y="475.3" width="4" height="20.1" fill="#ef5350" stroke="#3c3c3c" stroke-width="1"/>
<line x1="806.3" y1="492.5" x2="806.3" y2="509.5" stroke="#3c3c3c" stroke-width="1"/>
<rect x="804.3" y="495.4" width="4" height="9.9" fill="#ef5350" stroke="#3c3c3c" stroke-width="1"/>
<line x1="812.2" y1="467" x2="812.2" y2="502.4" stroke="#3c3c3c" stroke-width="1"/>
<rect x="810.2" y="472.3" width="4" height="30.1" fill="#26a69a" stroke="#3c3c3c" stroke-width="1"/>
<line x1="818.1" y1="472.3" x2="818.1" y2="583.7" stroke="#3c3c3c" stroke-width="1"/>
<rect x="816.1" y="472.3" width="4" height="108.4" fill="#ef5350" stroke="#3c3c3c" stroke-width="1"/>
<line x1="823.9" y1="550.7" x2="823.9" y2="652.8" stroke="#3c3c3c" stroke-width="1"/>
<rect x="821.9" y="581.4" width="4" height="29.4" fill="#ef5350" stroke="#3c3c3c" stroke-width="1"/>
<line x1="829.8" y1="580.2" x2="829.8" y2="654.4" stroke="#3c3c3c" stroke-width="1"/>
<rect x="827.8" y="613.2" width="4" height="29.0" fill="#ef5350" stroke="#3c3c3c" stroke-width="1"/>
<line x1="835.7" y1="602.6" x2="835.7" y2="660.3" stroke="#3c3c3c" stroke-width="1"/>
<rect x="833.7" y="638" width="4" height="3.0" fill="#26a69a" stroke="#3c3c3c" stroke-width="1"/>
<line x1="841.6" y1="567.2" x2="841.6" y2="638" stroke="#3c3c3c" stroke-width="1"/>
<rect x="839.6" y="575" width="4" height="62.4" fill="#26a69a" stroke="#3c3c3c" stroke-width="1"/>
<line x1="847.5" y1="556" x2="847.5" y2="577.5" stroke="#3c3c3c" stroke-width="1"/>
<rect x="845.5" y="569.5" width="4" height="4.7" fill="#26a69a" stroke="#3c3c3c" stroke-width="1"/>
<line x1="853.4" y1="532.4" x2="853.4" y2="577.2" stroke="#3c3c3c" stroke-width="1"/>
<rect x="851.4" y="533.9" width="4" height="38.4" fill="#26a69a" stroke="#3c3c3c" stroke-width="1"/>
<line x1="859.3" y1="529.2" x2="859.3" y2="543.7" stroke="#3c3c3c" stroke-width="1"/>
<rect x="857.3" y="533.9" width="4" height="7.0" fill="#ef5350" stroke="#3c3c3c" stroke-width="1"/>
<line x1="865.2" y1="526" x2="865.2" y2="600.7" stroke="#3c3c3c" stroke-width="1"/>
<rect x="863.2" y="541.4" width="4" height="47.6" fill="#ef5350" stroke="#3c3c3c" stroke-width="1"/>
<line x1="871.0" y1="553.7" x2="871.0" y2="590" stroke="#3c3c3c" stroke-width="1"/>
<line x1="869.0" y1="589" x2="873.0" y2="589" stroke="#3c3c3c" stroke-width="1"/>
<line x1="876.9" y1="569.3" x2="876.9" y2="619.3" stroke="#3c3c3c" stroke-width="1"/>
<rect x="874.9" y="589.4" width="4" height="7.0" fill="#ef5350" stroke="#3c3c3c" stroke-width="1"/>
<line x1="882.8" y1="581.5" x2="882.8" y2="686.7" stroke="#3c3c3c" stroke-width="1"/>
<rect x="880.8" y="594.3" width="4" height="60.4" fill="#ef5350" stroke="#3c3c3c" stroke-width="1"/>
<line x1="888.7" y1="631.6" x2="888.7" y2="671.1" stroke="#3c3c3c" stroke-width="1"/>
<rect x="886.7" y="653.4" width="4" height="7.7" fill="#ef5350" stroke="#3c3c3c" stroke-width="1"/>
<line x1="894.6" y1="620" x2="894.6" y2="671.1" stroke="#3c3c3c" stroke-width="1"/>
<rect x="892.6" y="621" width="4" height="40.1" fill="#26a69a" stroke="#3c3c3c" stroke-width="1"/>
<line x1="900.5" y1="620" x2="900.5" y2="652" stroke="#3c3c3c" stroke-width="1"/>
<rect x="898.5" y="621" width="4" height="30.3" fill="#ef5350" stroke="#3c3c3c" stroke-width="1"/>
<line x1="906.4" y1="639.3" x2="906.4" y2="676.2" stroke="#3c3c3c" stroke-width="1"/>
<rect x="904.4" y="646.6" width="4" height="4.7" fill="#26a69a" stroke="#3c3c3c" stroke-width="1"/>
<line x1="912.2" y1="643.7" x2="912.2" y2="686.4" stroke="#3c3c3c" stroke-width="1"/>
<rect x="910.2" y="644.4" width="4" height="38.8" fill="#ef5350" stroke="#3c3c3c" stroke-width="1"/>
<line x1="918.1" y1="679.4" x2="918.1" y2="785.7" stroke="#3c3c3c" stroke-width="1"/>
<rect x="916.1" y="683.2" width="4" height="40.1" fill="#ef5350" stroke="#3c3c3c" stroke-width="1"/>
<line x1="924.0" y1="703.5" x2="924.0" y2="751.5" stroke="#3c3c3c" stroke-width="1"/>
<rect x="922.0" y="723.3" width="4" height="3.2" fill="#ef5350" stroke="#3c3c3c" stroke-width="1"/>
<line x1="929.9" y1="722.7" x2="929.9" y2="783.5" stroke="#3c3c3c" stroke-width="1"/>
<rect x="927.9" y="726.5" width="4" height="30.4" fill="#ef5350" stroke="#3c3c3c" stroke-width="1"/>
<line x1="935.8" y1="711" x2="935.8" y2="771.8" stroke="#3c3c3c" stroke-width="1"/>
<rect x="933.8" y="716.3" width="4" height="42.0" fill="#26a69a" stroke="#3c3c3c" stroke-width="1"/>
<line x1="941.7" y1="673" x2="941.7" y2="716.3" stroke="#3c3c3c" stroke-width="1"/>
<rect x="939.7" y="686.4" width="4" height="29.9" fill="#26a69a" stroke="#3c3c3c" stroke-width="1"/>
<line x1="947.6" y1="672.6" x2="947.6" y2="696" stroke="#3c3c3c" stroke-width="1"/>
<rect x="945.6" y="673" width="4" height="13.4" fill="#26a69a" stroke="#3c3c3c" stroke-width="1"/>
<line x1="953.5" y1="652.9" x2="953.5" y2="677.9" stroke="#3c3c3c" stroke-width="1"/>
<rect x="951.5" y="654.4" width="4" height="18.6" fill="#26a69a" stroke="#3c3c3c" stroke-width="1"/>
<line x1="959.3" y1="640.8" x2="959.3" y2="662" stroke="#3c3c3c" stroke-width="1"/>
<rect x="957.3" y="652.9" width="4" height="1.5" fill="#ef5350" stroke="#3c3c3c" stroke-width="1"/>
<line x1="965.2" y1="636.7" x2="965.2" y2="677" stroke="#3c3c3c" stroke-width="1"/>
<rect x="963.2" y="637.6" width="4" height="15.3" fill="#26a69a" stroke="#3c3c3c" stroke-width="1"/>
<line x1="971.1" y1="624.5" x2="971.1" y2="657.3" stroke="#3c3c3c" stroke-width="1"/>
<rect x="969.1" y="637.9" width="4" height="6.1" fill="#ef5350" stroke="#3c3c3c" stroke-width="1"/>
<line x1="977.0" y1="624.5" x2="977.0" y2="646.3" stroke="#3c3c3c" stroke-width="1"/>
<rect x="975.0" y="628.3" width="4" height="15.7" fill="#26a69a" stroke="#3c3c3c" stroke-width="1"/>
<line x1="982.9" y1="624.5" x2="982.9" y2="644" stroke="#3c3c3c" stroke-width="1"/>
<rect x="980.9" y="628.3" width="4" height="7.7" fill="#ef5350" stroke="#3c3c3c" stroke-width="1"/>
<line x1="988.8" y1="618.2" x2="988.8" y2="654.5" stroke="#3c3c3c" stroke-width="1"/>
<rect x="986.8" y="622.6" width="4" height="13.4" fill="#26a69a" stroke="#3c3c3c" stroke-width="1"/>
<line x1="994.7" y1="605.8" x2="994.7" y2="634.4" stroke="#3c3c3c" stroke-width="1"/>
<line x1="992.7" y1="622" x2="996.7" y2="622" stroke="#3c3c3c" stroke-width="1"/>
<line x1="1000.6" y1="607.7" x2="1000.6" y2="629.7" stroke="#3c3c3c" stroke-width="1"/>
<rect x="998.6" y="609.6" width="4" height="13.0" fill="#26a69a" stroke="#3c3c3c" stroke-width="1"/>
<line x1="1006.4" y1="594" x2="1006.4" y2="625.3" stroke="#3c3c3c" stroke-width="1"/>
<rect x="1004.4" y="596.3" width="4" height="13.0" fill="#26a69a" stroke="#3c3c3c" stroke-width="1"/>
<line x1="1012.3" y1="594.4" x2="1012.3" y2="632.5" stroke="#3c3c3c" stroke-width="1"/>
<rect x="1010.3" y="596.3" width="4" height="27.7" fill="#ef5350" stroke="#3c3c3c" stroke-width="1"/>
<line x1="1018.2" y1="585.6" x2="1018.2" y2="637.3" stroke="#3c3c3c" stroke-width="1"/>
<rect x="1016.2" y="599.4" width="4" height="24.6" fill="#26a69a" stroke="#3c3c3c" stroke-width="1"/>
<line x1="1024.1" y1="555.8" x2="1024.1" y2="600.7" stroke="#3c3c3c" stroke-width="1"/>
<rect x="1022.1" y="559.5" width="4" height="37.8" fill="#26a69a" stroke="#3c3c3c" stroke-width="1"/>
<line x1="1030.0" y1="549.1" x2="1030.0" y2="584.3" stroke="#3c3c3c" stroke-width="1"/>
<rect x="1028.0" y="558.3" width="4" height="17.9" fill="#ef5350" stroke="#3c3c3c" stroke-width="1"/>
<line x1="1035.9" y1="569.4" x2="1035.9" y2="597.5" stroke="#3c3c3c" stroke-width="1"/>
<line x1="1033.9" y1="576.5" x2="1037.9" y2="576.5" stroke="#3c3c3c" stroke-width="1"/>
<line x1="1041.8" y1="537" x2="1041.8" y2="577" stroke="#3c3c3c" stroke-width="1"/>
<rect x="1039.8" y="537.8" width="4" height="38.4" fill="#26a69a" stroke="#3c3c3c" stroke-width="1"/>
<line x1="1047.6" y1="521.4" x2="1047.6" y2="552.3" stroke="#3c3c3c" stroke-width="1"/>
<rect x="1045.6" y="537.8" width="4" height="6.4" fill="#ef5350" stroke="#3c3c3c" stroke-width="1"/>
<line x1="1053.5" y1="527.8" x2="1053.5" y2="544.8" stroke="#3c3c3c" stroke-width="1"/>
<rect x="1051.5" y="532.5" width="4" height="11.7" fill="#26a69a" stroke="#3c3c3c" stroke-width="1"/>
<line x1="1059.4" y1="500.7" x2="1059.4" y2="539.5" stroke="#3c3c3c" stroke-width="1"/>
<rect x="1057.4" y="502.2" width="4" height="30.3" fill="#26a69a" stroke="#3c3c3c" stroke-width="1"/>
<line x1="1065.3" y1="484" x2="1065.3" y2="510.7" stroke="#3c3c3c" stroke-width="1"/>
<rect x="1063.3" y="492.6" width="4" height="9.6" fill="#26a69a" stroke="#3c3c3c" stroke-width="1"/>
<line x1="1071.2" y1="469.1" x2="1071.2" y2="508.6" stroke="#3c3c3c" stroke-width="1"/>
<rect x="1069.2" y="475.5" width="4" height="17.1" fill="#26a69a" stroke="#3c3c3c" stroke-width="1"/>
<line x1="1077.1" y1="461.8" x2="1077.1" y2="481.8" stroke="#3c3c3c" stroke-width="1"/>
<rect x="1075.1" y="465.7" width="4" height="9.5" fill="#26a69a" stroke="#3c3c3c" stroke-width="1"/>
<line x1="1083.0" y1="449.1" x2="1083.0" y2="465.7" stroke="#3c3c3c" stroke-width="1"/>
<rect x="1081.0" y="457.2" width="4" height="6.5" fill="#26a69a" stroke="#3c3c3c" stroke-width="1"/>
<line x1="1088.9" y1="403.6" x2="1088.9" y2="461.9" stroke="#3c3c3c" stroke-width="1"/>
<rect x="1086.9" y="420.3" width="4" height="36.8" fill="#26a69a" stroke="#3c3c3c" stroke-width="1"/>
<line x1="1094.7" y1="385" x2="1094.7" y2="421" stroke="#3c3c3c" stroke-width="1"/>
<rect x="1092.7" y="385.1" width="4" height="35.2" fill="#26a69a" stroke="#3c3c3c" stroke-width="1"/>
<line x1="1100.6" y1="346.5" x2="1100.6" y2="393.7" stroke="#3c3c3c" stroke-width="1"/>
<rect x="1098.6" y="353" width="4" height="32.1" fill="#26a69a" stroke="#3c3c3c" stroke-width="1"/>
<line x1="1106.5" y1="354.6" x2="1106.5" y2="465.5" stroke="#3c3c3c" stroke-width="1"/>
<rect x="1104.5" y="354.6" width="4" height="82.6" fill="#ef5350" stroke="#3c3c3c" stroke-width="1"/>
<line x1="1112.4" y1="423.3" x2="1112.4" y2="477.2" stroke="#3c3c3c" stroke-width="1"/>
<rect x="1110.4" y="438.6" width="4" height="14.9" fill="#ef5350" stroke="#3c3c3c" stroke-width="1"/>
<line x1="1118.3" y1="373.1" x2="1118.3" y2="453.9" stroke="#3c3c3c" stroke-width="1"/>
<rect x="1116.3" y="405.4" width="4" height="48.1" fill="#26a69a" stroke="#3c3c3c" stroke-width="1"/>
<line x1="1124.2" y1="393.7" x2="1124.2" y2="428.4" stroke="#3c3c3c" stroke-width="1"/>
<line x1="1122.2" y1="405" x2="1126.2" y2="405" stroke="#3c3c3c" stroke-width="1"/>
<line x1="1130.1" y1="383.5" x2="1130.1" y2="439.9" stroke="#3c3c3c" stroke-width="1"/>
<rect x="1128.1" y="405.4" width="4" height="6.8" fill="#ef5350" stroke="#3c3c3c" stroke-width="1"/>
<line x1="1136.0" y1="403.3" x2="1136.0" y2="438.6" stroke="#3c3c3c" stroke-width="1"/>
<rect x="1134.0" y="415.4" width="4" height="1.6" fill="#ef5350" stroke="#3c3c3c" stroke-width="1"/>
<line x1="1141.8" y1="337.5" x2="1141.8" y2="419" stroke="#3c3c3c" stroke-width="1"/>
<rect x="1139.8" y="338" width="4" height="80.4" fill="#26a69a" stroke="#3c3c3c" stroke-width="1"/>
<line x1="1147.7" y1="323" x2="1147.7" y2="389.6" stroke="#3c3c3c" stroke-width="1"/>
<rect x="1145.7" y="337.8" width="4" height="50.6" fill="#ef5350" stroke="#3c3c3c" stroke-width="1"/>
<line x1="1153.6" y1="355" x2="1153.6" y2="397.7" stroke="#3c3c3c" stroke-width="1"/>
<rect x="1151.6" y="388" width="4" height="9.0" fill="#ef5350" stroke="#3c3c3c" stroke-width="1"/>
<line x1="1159.5" y1="387.8" x2="1159.5" y2="405.7" stroke="#3c3c3c" stroke-width="1"/>
<rect x="1157.5" y="388" width="4" height="10.6" fill="#26a69a" stroke="#3c3c3c" stroke-width="1"/>
<line x1="1165.4" y1="382" x2="1165.4" y2="408.8" stroke="#3c3c3c" stroke-width="1"/>
<rect x="1163.4" y="388" width="4" height="3.5" fill="#ef5350" stroke="#3c3c3c" stroke-width="1"/>
<line x1="1171.3" y1="390.9" x2="1171.3" y2="413.1" stroke="#3c3c3c" stroke-width="1"/>
<rect x="1169.3" y="391.2" width="4" height="10.4" fill="#ef5350" stroke="#3c3c3c" stroke-width="1"/>
<line x1="1177.2" y1="388" x2="1177.2" y2="406.9" stroke="#3c3c3c" stroke-width="1"/>
<rect x="1175.2" y="400.4" width="4" height="5.9" fill="#ef5350" stroke="#3c3c3c" stroke-width="1"/>
<line x1="296" y1="406.5" x2="1265" y2="406.5" stroke="#222" stroke-width="2" stroke-dasharray="2 3"/>
</g>
<line x1="1265.5" y1="196" x2="1265.5" y2="788" stroke="#6a6a72" stroke-width="1.2"/>
<line x1="296" y1="788.5" x2="1265" y2="788.5" stroke="#6a6a72" stroke-width="1.2"/>
<line x1="1265" y1="228.9" x2="1270" y2="228.9" stroke="#555" stroke-width="1"/>
<line x1="1265" y1="262.4" x2="1270" y2="262.4" stroke="#555" stroke-width="1"/>
<line x1="1265" y1="295.9" x2="1270" y2="295.9" stroke="#555" stroke-width="1"/>
<line x1="1265" y1="329.4" x2="1270" y2="329.4" stroke="#555" stroke-width="1"/>
<line x1="1265" y1="362.9" x2="1270" y2="362.9" stroke="#555" stroke-width="1"/>
<line x1="1265" y1="396.4" x2="1270" y2="396.4" stroke="#555" stroke-width="1"/>
<line x1="1265" y1="429.9" x2="1270" y2="429.9" stroke="#555" stroke-width="1"/>
<line x1="1265" y1="463.4" x2="1270" y2="463.4" stroke="#555" stroke-width="1"/>
<line x1="1265" y1="496.9" x2="1270" y2="496.9" stroke="#555" stroke-width="1"/>
<line x1="1265" y1="530.5" x2="1270" y2="530.5" stroke="#555" stroke-width="1"/>
<line x1="1265" y1="564.0" x2="1270" y2="564.0" stroke="#555" stroke-width="1"/>
<line x1="1265" y1="597.5" x2="1270" y2="597.5" stroke="#555" stroke-width="1"/>
<line x1="1265" y1="631.0" x2="1270" y2="631.0" stroke="#555" stroke-width="1"/>
<line x1="1265" y1="664.5" x2="1270" y2="664.5" stroke="#555" stroke-width="1"/>
<line x1="1265" y1="698.0" x2="1270" y2="698.0" stroke="#555" stroke-width="1"/>
<line x1="1265" y1="731.5" x2="1270" y2="731.5" stroke="#555" stroke-width="1"/>
<line x1="1265" y1="765.0" x2="1270" y2="765.0" stroke="#555" stroke-width="1"/>
<line x1="335.3" y1="788" x2="335.3" y2="793" stroke="#555" stroke-width="1"/>
<line x1="405.9" y1="788" x2="405.9" y2="793" stroke="#555" stroke-width="1"/>
<line x1="476.6" y1="788" x2="476.6" y2="793" stroke="#555" stroke-width="1"/>
<line x1="547.2" y1="788" x2="547.2" y2="793" stroke="#555" stroke-width="1"/>
<line x1="617.9" y1="788" x2="617.9" y2="793" stroke="#555" stroke-width="1"/>
<line x1="688.5" y1="788" x2="688.5" y2="793" stroke="#555" stroke-width="1"/>
<line x1="759.1" y1="788" x2="759.1" y2="793" stroke="#555" stroke-width="1"/>
<line x1="829.8" y1="788" x2="829.8" y2="793" stroke="#555" stroke-width="1"/>
<line x1="900.4" y1="788" x2="900.4" y2="793" stroke="#555" stroke-width="1"/>
<line x1="971.1" y1="788" x2="971.1" y2="793" stroke="#555" stroke-width="1"/>
<line x1="1041.7" y1="788" x2="1041.7" y2="793" stroke="#555" stroke-width="1"/>
<line x1="1112.3" y1="788" x2="1112.3" y2="793" stroke="#555" stroke-width="1"/>
</svg>
<div class="a" style="left:1266px;top:196px;width:53px;height:592px;overflow:hidden">
<div class="t" style="left:5px;top:-7.6px;font-size:12px;letter-spacing:0;color:#333">6.5800</div>
<div class="t" style="left:5px;top:25.9px;font-size:12px;letter-spacing:0;color:#333">6.5600</div>
<div class="t" style="left:5px;top:59.4px;font-size:12px;letter-spacing:0;color:#333">6.5400</div>
<div class="t" style="left:5px;top:92.9px;font-size:12px;letter-spacing:0;color:#333">6.5200</div>
<div class="t" style="left:5px;top:126.4px;font-size:12px;letter-spacing:0;color:#333">6.5000</div>
<div class="t" style="left:5px;top:159.9px;font-size:12px;letter-spacing:0;color:#333">6.4800</div>
<div class="t" style="left:5px;top:193.4px;font-size:12px;letter-spacing:0;color:#333">6.4600</div>
<div class="t" style="left:5px;top:226.9px;font-size:12px;letter-spacing:0;color:#333">6.4400</div>
<div class="t" style="left:5px;top:260.4px;font-size:12px;letter-spacing:0;color:#333">6.4200</div>
<div class="t" style="left:5px;top:293.9px;font-size:12px;letter-spacing:0;color:#333">6.4000</div>
<div class="t" style="left:5px;top:327.5px;font-size:12px;letter-spacing:0;color:#333">6.3800</div>
<div class="t" style="left:5px;top:361.0px;font-size:12px;letter-spacing:0;color:#333">6.3600</div>
<div class="t" style="left:5px;top:394.5px;font-size:12px;letter-spacing:0;color:#333">6.3400</div>
<div class="t" style="left:5px;top:428.0px;font-size:12px;letter-spacing:0;color:#333">6.3200</div>
<div class="t" style="left:5px;top:461.5px;font-size:12px;letter-spacing:0;color:#333">6.3000</div>
<div class="t" style="left:5px;top:495.0px;font-size:12px;letter-spacing:0;color:#333">6.2800</div>
<div class="t" style="left:5px;top:528.5px;font-size:12px;letter-spacing:0;color:#333">6.2600</div>
<div class="t" style="left:5px;top:562.0px;font-size:12px;letter-spacing:0;color:#333">6.2400</div>
</div>
<svg style="left:1265px;top:399px" width="50" height="16"><path d="M0 7.5L6.5 1H48V15H6.5Z" fill="#0d0d0d"/></svg>
<div class="t" style="left:1272px;top:400px;font-size:12px;letter-spacing:0;color:#e6dca0">6.4540</div>
<div class="t" style="left:317.0px;top:793px;width:30px;text-align:center;font-size:11.5px;letter-spacing:0;color:#333">12:00</div>
<div class="t" style="left:387.6px;top:793px;width:30px;text-align:center;font-size:11.5px;letter-spacing:0;color:#333">14:00</div>
<div class="t" style="left:458.3px;top:793px;width:30px;text-align:center;font-size:11.5px;letter-spacing:0;color:#333">16:00</div>
<div class="t" style="left:528.9px;top:793px;width:30px;text-align:center;font-size:11.5px;letter-spacing:0;color:#333">18:00</div>
<div class="t" style="left:599.6px;top:793px;width:30px;text-align:center;font-size:11.5px;letter-spacing:0;color:#333">20:00</div>
<div class="t" style="left:670.2px;top:793px;width:30px;text-align:center;font-size:11.5px;letter-spacing:0;color:#333">22:00</div>
<div class="t" style="left:740.8px;top:793px;width:30px;text-align:center;font-size:11.5px;letter-spacing:0;color:#333">00:00</div>
<div class="t" style="left:811.5px;top:793px;width:30px;text-align:center;font-size:11.5px;letter-spacing:0;color:#333">02:00</div>
<div class="t" style="left:882.1px;top:793px;width:30px;text-align:center;font-size:11.5px;letter-spacing:0;color:#333">04:00</div>
<div class="t" style="left:952.8px;top:793px;width:30px;text-align:center;font-size:11.5px;letter-spacing:0;color:#333">06:00</div>
<div class="t" style="left:1023.4px;top:793px;width:30px;text-align:center;font-size:11.5px;letter-spacing:0;color:#333">08:00</div>
<div class="t" style="left:1094.0px;top:793px;width:30px;text-align:center;font-size:11.5px;letter-spacing:0;color:#333">10:00</div>
<div class="t" style="left:1113px;top:317px;font-size:12px;letter-spacing:-0.3px;color:#444">vPOC</div>
<div class="a" style="left:294px;top:836px;width:1027px;height:23px;background:#ececf1;border-left:1px solid #a8cdea;border-right:1px solid #a8cdea;border-bottom:1.5px solid #4a9ee0"></div>
<div class="t" style="left:301px;top:840.5px;font-size:11.6px;color:#454545;letter-spacing:0;">Orders</div>
<div class="t" style="left:349px;top:840.5px;font-size:11.6px;color:#454545;letter-spacing:0;">Trades</div>
<div class="t" style="left:395px;top:840.5px;font-size:11.6px;color:#454545;letter-spacing:0;">Positions - Active</div>
<div class="t" style="left:498px;top:840.5px;font-size:11.6px;color:#454545;letter-spacing:0;">Accounts</div>
<div class="t" style="left:558px;top:840.5px;font-size:11.6px;color:#454545;letter-spacing:0;">Statistics</div>
<div class="t" style="left:618.5px;top:840.5px;font-size:11.6px;color:#454545;letter-spacing:0;">Trading strategies</div>
<div class="a" style="left:718.3px;top:835px;width:121.5px;height:23px;background:#0a78d2"></div>
<div class="t" style="left:725px;top:840.5px;font-size:11.6px;color:#fff;letter-spacing:0;">TONUSDT M10 chart</div>
<div class="a" style="left:840px;top:836px;width:40px;height:22px;background:#f3f3f6;border-right:1px solid #dcdce4"></div>
<svg style="left:851px;top:839px" width="18" height="18"><path d="M9 1V17M1 9H17" stroke="#333" stroke-width="1.4"/></svg>
<svg style="left:300px;top:817px" width="6" height="9"><path d="M5 0V9L0 4.5Z" fill="#111"/></svg>
<div class="a" style="left:1138px;top:816px;width:8px;height:10px;background:#c8c8d2"></div>
<svg style="left:1153px;top:817px" width="6" height="9"><path d="M0 0V9L5 4.5Z" fill="#111"/></svg>
<div class="t" style="left:1168.5px;top:814px;font-size:12px;color:#454545;letter-spacing:0;">DOM Trader</div>
<div class="t" style="left:1247.5px;top:814px;font-size:11.7px;color:#454545;letter-spacing:0;">Chart Trader</div>
<svg style="left:11px;top:873px" width="8" height="8"><circle cx="4" cy="4" r="3" fill="#3cb878"/></svg>
<div class="t" style="left:24px;top:870px;font-size:11.4px;color:#454545;letter-spacing:0;letter-spacing:-0.2px">Server: <b style="color:#222">E2</b></div>
<svg style="left:84px;top:870px" width="14" height="10"><path d="M2.5 8L6.8 3.8L11 8" fill="none" stroke="#333" stroke-width="1.3"/></svg>
<svg style="left:104px;top:869px" width="17" height="17"><circle cx="8.5" cy="8.5" r="2.6" fill="none" stroke="#444" stroke-width="1.2"/>
<path d="M8.5 1.5L10.1 3.4L12.6 2.9L13 5.5L15.5 6.3L14.6 8.5L15.5 10.7L13 11.5L12.6 14.1L10.1 13.6L8.5 15.5L6.9 13.6L4.4 14.1L4 11.5L1.5 10.7L2.4 8.5L1.5 6.3L4 5.5L4.4 2.9L6.9 3.4Z" fill="none" stroke="#444" stroke-width="1.2"/></svg>
<div class="t" style="left:1238.5px;top:870px;font-size:11.7px;color:#808080;letter-spacing:0;">v7.0.0.210-beta</div>
<svg style="left:1312px;top:879px" width="12" height="12"><g fill="#999"><rect x="8" y="2" width="1.5" height="1.5"/><rect x="5" y="5" width="1.5" height="1.5"/><rect x="8" y="5" width="1.5" height="1.5"/><rect x="2" y="8" width="1.5" height="1.5"/><rect x="5" y="8" width="1.5" height="1.5"/><rect x="8" y="8" width="1.5" height="1.5"/></g></svg>
<div class="a" style="left:9.2px;top:200.5px;width:277px;height:271px;border:3px solid #ff0000;border-radius:5px"></div>
<svg style="left:0;top:0" width="1324" height="891">
<path d="M82 156L49 174.5" stroke="#ff0000" stroke-width="2.6"/><path d="M43.5 178L52 167.5L58.5 177Z" fill="#ff0000"/>
<path d="M60.7 759L108 814" stroke="#ff0000" stroke-width="2.6"/><path d="M114.5 822.5L99.5 815.5L109.5 807Z" fill="#ff0000"/>
</svg>
<svg style="left:32.5px;top:73.2px" width="34" height="34"><circle cx="17" cy="17" r="16" fill="#fff"/><circle cx="17" cy="17" r="14.5" fill="#ff0000"/><path d="M15.5 9.8H18.7V24.8H15.5V13.5Q14 14.8 12.2 15.5V12.6Q14.5 11.6 15.5 9.8Z" fill="#fff"/></svg>
<svg style="left:785.3px;top:53.8px" width="34" height="34"><circle cx="17" cy="17" r="16" fill="#fff"/><circle cx="17" cy="17" r="14.5" fill="#ff0000"/></svg><div class="t" style="left:785.3px;top:59.3px;width:34px;text-align:center;font-size:21px;line-height:23px;font-weight:bold;color:#fff;letter-spacing:0">2</div>
<svg style="left:78px;top:131px" width="34" height="34"><circle cx="17" cy="17" r="16" fill="#fff"/><circle cx="17" cy="17" r="14.5" fill="#ff0000"/></svg><div class="t" style="left:78px;top:136.5px;width:34px;text-align:center;font-size:21px;line-height:23px;font-weight:bold;color:#fff;letter-spacing:0">3</div>
<svg style="left:253.5px;top:185.2px" width="34" height="34"><circle cx="17" cy="17" r="16" fill="#fff"/><circle cx="17" cy="17" r="14.5" fill="#ff0000"/></svg><div class="t" style="left:253.5px;top:190.7px;width:34px;text-align:center;font-size:21px;line-height:23px;font-weight:bold;color:#fff;letter-spacing:0">4</div>
<svg style="left:35.6px;top:727.2px" width="34" height="34"><circle cx="17" cy="17" r="16" fill="#fff"/><circle cx="17" cy="17" r="14.5" fill="#ff0000"/></svg><div class="t" style="left:35.6px;top:732.7px;width:34px;text-align:center;font-size:21px;line-height:23px;font-weight:bold;color:#fff;letter-spacing:0">5</div>
</body></html>
